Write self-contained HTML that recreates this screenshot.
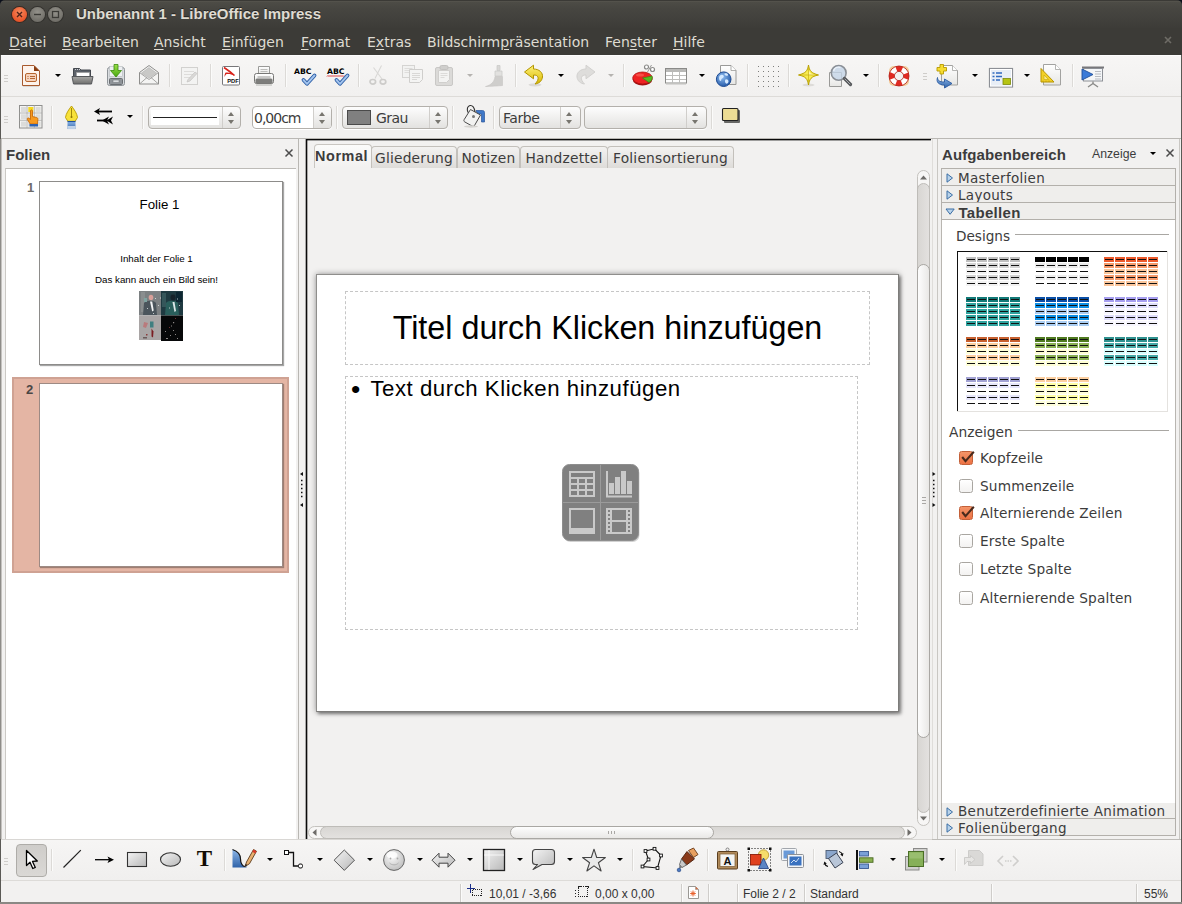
<!DOCTYPE html>
<html lang="de"><head><meta charset="utf-8"><title>Unbenannt 1 - LibreOffice Impress</title>
<style>
*{box-sizing:border-box;margin:0;padding:0}
html,body{width:1182px;height:904px;overflow:hidden;background:#f2f1f0}
body{position:relative;font-family:"DejaVu Sans","Liberation Sans",sans-serif;font-size:14px;color:#3c3c3c}
.abs{position:absolute}
.b{font-family:"Liberation Sans",sans-serif;font-weight:bold;font-size:15px}
#titlebar{left:0;top:0;width:1182px;height:28px;background:linear-gradient(#3b3a36 0,#3b3a36 1px,#5a5851 1px,#4d4c46 2px,#474641 30%,#3d3c38 100%);border-radius:5px 5px 0 0}
#corners{left:0;top:0;width:1182px;height:10px;background:#0b0f1a}
#menubar{left:0;top:28px;width:1182px;height:27.5px;background:#3c3b37}
.menu{position:absolute;top:34px;color:#dfdbd2;font-size:14px;line-height:17px;white-space:nowrap}
.menu u{text-decoration-thickness:1px;text-underline-offset:2px}
#title{left:76px;top:5px;color:#dfdbd2;line-height:18px;white-space:nowrap;text-shadow:0 -1px 0 rgba(0,0,0,.5)}
.wbtn{position:absolute;top:7px;width:15px;height:15px;border-radius:50%}
#tb1{left:1px;top:55px;width:1180px;height:41px;background:linear-gradient(#f7f6f5,#f1f0ef)}
#tb2{left:1px;top:97px;width:1180px;height:41px;background:#f2f1f0}
.hline{position:absolute;height:1px}
.vsep{position:absolute;width:1px;background:#dcdad7;box-shadow:1px 0 0 #fbfbfa}
.ic{position:absolute;overflow:visible}
.dd{position:absolute;width:0;height:0;margin-left:.5px;border-left:3px solid transparent;border-right:3px solid transparent;border-top:3.2px solid #000}
.dd.dis{border-top-color:#b5b3b0}
.handle{position:absolute;width:4px;height:7px;background:repeating-linear-gradient(#cfcdca 0 1px,transparent 1px 3px)}
.combo{position:absolute;height:23px;border:1px solid #b3b0ab;border-radius:4px;background:linear-gradient(#fdfdfd,#e3e2e0);box-shadow:0 1px 0 #fff}
.spin{position:absolute;right:0;top:0;width:17px;height:21px;border-left:1px solid #d0cecb}
.spin:before,.spin:after{content:"";position:absolute;left:4.5px;border-left:3.5px solid transparent;border-right:3.5px solid transparent}
.spin:before{top:5px;border-bottom:4px solid #77756f}
.spin:after{top:13px;border-top:4px solid #77756f}
.ctext{position:absolute;top:3px;font-size:14px;line-height:17px;color:#3c3c3c;white-space:nowrap}
.panel-title{position:absolute;color:#3c3c3c;line-height:18px;white-space:nowrap}
.tab{position:absolute;top:146px;height:22px;border:1px solid #c3c0bb;border-bottom:none;background:linear-gradient(#f3f2f1,#dedcd9);font-size:13.8px;line-height:23px;text-align:center;color:#3c3c3c;white-space:nowrap;border-radius:4px 4px 0 0;letter-spacing:.2px}
.sec{position:absolute;left:941px;width:235px;height:17px;border:1px solid #b3b0ab;background:#efeeec;font-size:14px;line-height:15px;color:#3c3c3c;white-space:nowrap}
.sec span{position:absolute;left:16px;top:2px;font-size:13.5px;letter-spacing:.3px}
.cb{position:absolute;left:959px;width:14px;height:14px;border:1px solid #a9a6a1;border-radius:2.5px;background:linear-gradient(#fff,#f3f2f1)}
.cb.on{background:linear-gradient(#f49468,#ec7244);border-color:#c46038}
.cbl{position:absolute;left:980px;font-size:13.7px;line-height:17px;color:#3c3c3c;white-space:nowrap;letter-spacing:.15px}
.st{position:absolute;top:886px;font-family:"Liberation Sans",sans-serif;font-size:12px;line-height:16px;color:#333;white-space:nowrap}
.ssep{position:absolute;top:884px;width:1px;height:18px;background:#cfcdca;box-shadow:1px 0 0 #fbfbfa}
</style></head><body>
<!-- window frame -->
<div id="corners" class="abs"></div>
<div id="titlebar" class="abs"></div>
<div id="menubar" class="abs"></div>
<div class="wbtn" style="left:12px;background:radial-gradient(circle at 50% 35%,#f58a5e,#e9552a 70%,#c9441f);box-shadow:0 0 0 1px #3a2a22"></div>
<div class="wbtn" style="left:30px;background:radial-gradient(circle at 50% 35%,#93918a,#706e68 75%);box-shadow:0 0 0 1px #33322e"></div>
<div class="wbtn" style="left:48px;background:radial-gradient(circle at 50% 35%,#93918a,#706e68 75%);box-shadow:0 0 0 1px #33322e"></div>
<svg class="ic" style="left:12px;top:7px" width="52" height="15"><path d="M5 5l5 5M10 5l-5 5" stroke="#50231a" stroke-width="1.4" fill="none"/><path d="M22 7.5h7" stroke="#3b3a36" stroke-width="1.4"/><rect x="40.5" y="4.5" width="6" height="6" fill="none" stroke="#3b3a36" stroke-width="1.3"/></svg>
<div id="title" class="abs b">Unbenannt 1 - LibreOffice Impress</div>
<div class="menu" style="left:9px"><u>D</u>atei</div>
<div class="menu" style="left:62px"><u>B</u>earbeiten</div>
<div class="menu" style="left:154px"><u>A</u>nsicht</div>
<div class="menu" style="left:222px"><u>E</u>infügen</div>
<div class="menu" style="left:301px"><u>F</u>ormat</div>
<div class="menu" style="left:367px">E<u>x</u>tras</div>
<div class="menu" style="left:427px">Bildschirm<u>p</u>räsentation</div>
<div class="menu" style="left:605px">Fen<u>s</u>ter</div>
<div class="menu" style="left:673px"><u>H</u>ilfe</div>
<svg class="ic" style="left:1164px;top:36px" width="9" height="9"><path d="M1 1l6 6M7 1l-6 6" stroke="#6e6c66" stroke-width="1.6"/></svg>
<div class="abs" style="left:0;top:55px;width:1px;height:849px;background:#5a5955"></div>
<div class="abs" style="left:1181px;top:55px;width:1px;height:849px;background:#5a5955"></div>
<!-- toolbars -->
<div id="tb1" class="abs"></div><div class="hline" style="left:1px;top:55px;width:1180px;background:#fdfdfd"></div>
<div class="hline" style="left:1px;top:96px;width:1180px;background:#dddbd8"></div>
<div id="tb2" class="abs"></div>
<!--TB1S--><svg width="0" height="0" style="position:absolute"><defs>
<linearGradient id="gPaper" x1="0" y1="0" x2="0" y2="1"><stop offset="0" stop-color="#fff"/><stop offset="1" stop-color="#e6e6e4"/></linearGradient>
<linearGradient id="gGrey" x1="0" y1="0" x2="0" y2="1"><stop offset="0" stop-color="#a8a8a6"/><stop offset="1" stop-color="#6e6e6c"/></linearGradient>
<linearGradient id="gGreen" x1="0" y1="0" x2="0" y2="1"><stop offset="0" stop-color="#9be04a"/><stop offset="1" stop-color="#4aa810"/></linearGradient>
<linearGradient id="gYel" x1="0" y1="0" x2="0" y2="1"><stop offset="0" stop-color="#fff27a"/><stop offset="1" stop-color="#d8b800"/></linearGradient>
<linearGradient id="gBlue" x1="0" y1="0" x2="0" y2="1"><stop offset="0" stop-color="#8db7e8"/><stop offset="1" stop-color="#2f62a8"/></linearGradient>
<radialGradient id="gGlobe" cx=".4" cy=".35" r=".7"><stop offset="0" stop-color="#8fbdf0"/><stop offset="1" stop-color="#1f55a5"/></radialGradient>
<radialGradient id="gSmile" cx=".4" cy=".35" r=".7"><stop offset="0" stop-color="#fafafa"/><stop offset="1" stop-color="#bdbdbd"/></radialGradient>
<linearGradient id="gBtn" x1="0" y1="0" x2="1" y2="1"><stop offset="0" stop-color="#f4f4f4"/><stop offset="1" stop-color="#b8b8b8"/></linearGradient>
</defs></svg>
<div class="handle" style="left:4px;top:75px"></div>
<svg class="ic" style="left:21px;top:64px" width="20" height="23" viewBox="0 0 20 23" ><path d="M1.500 1.500h11.500l5.500 5.500v14.500h-17z" fill="#fdf3ec" stroke="#a85a2e" stroke-width="1"/><path d="M13 1.500l5.500 5.500h-5.500z" fill="#8a3d12"/><rect x="4.500" y="9.500" width="11" height="8" rx="1.500" fill="#f6d3bd" stroke="#b5652f"/><path d="M6.500 12.500h1M9 12.500h5M6.500 14.500h1M9 14.500h5" stroke="#b5652f" stroke-width="1"/><path d="M2 22.500h16" stroke="#d9d7d4"/></svg>
<div class="dd" style="left:54px;top:74px"></div>
<svg class="ic" style="left:71px;top:66px" width="23" height="19" viewBox="0 0 23 19" ><path d="M2.500 2.500h6l1.500 1.500h9.500v10h-17z" fill="#5d626a" stroke="#44484e"/><path d="M4 3.500h1M6 3.500h1M8 3.500h1" stroke="#c8ccd2" stroke-width="1"/><rect x="5.500" y="6.500" width="13" height="4" fill="#fff" stroke="#9a9a9a" stroke-width=".6"/><path d="M1 10.500h21l-1.500 7.500h-18z" fill="url(#gGrey)" stroke="#55575a"/></svg>
<svg class="ic" style="left:106px;top:64px" width="20" height="23" viewBox="0 0 20 23" ><rect x="1.500" y="3.500" width="17" height="18" rx="2" fill="#d9dcdf" stroke="#8e9397"/><rect x="3.500" y="2.500" width="13" height="10" fill="#eef0f2" stroke="#b3b7bb" stroke-width=".6"/><rect x="3.500" y="14.500" width="13" height="6" rx="1" fill="#8f9499" stroke="#6a6e72"/><rect x="7" y="16" width="6" height="2.500" fill="#d9dcdf" stroke="#6a6e72" stroke-width=".5"/><path d="M8 0.500h4v6h3.500l-5.500 6.500l-5.500-6.500h3.500z" fill="url(#gGreen)" stroke="#3b8a0c" stroke-width=".8"/></svg>
<svg class="ic" style="left:138px;top:64px" width="22" height="22" viewBox="0 0 22 22" ><path d="M1.500 8.500l9.500-7l9.500 7v11.500h-19z" fill="#f4f4f3" stroke="#8e8e8c"/><path d="M3.500 9l7.500-5.500l7.500 5.500l-7.500 5z" fill="#c9c9c7" stroke="#aaa" stroke-width=".5"/><path d="M1.500 8.500l9.500 7l9.500-7M1.500 20l7.500-6.500M20.500 20l-7.500-6.500" fill="none" stroke="#9c9c9a" stroke-width=".9"/></svg>
<div class="vsep" style="left:169px;top:64px;height:23px"></div>
<svg class="ic" style="left:180px;top:66px" width="20" height="20" viewBox="0 0 20 20" ><rect x="1.500" y="1.500" width="16" height="17" fill="#f3f3f2" stroke="#d2d1cf"/><path d="M4 5.500h10M4 8.500h10M4 11.500h6" stroke="#dddcda"/><path d="M8 13.500l7-7.500l2 1.500l-7 7.500l-3 1z" fill="#dad9d7" stroke="#c4c3c1" stroke-width=".7"/></svg>
<div class="vsep" style="left:210px;top:64px;height:23px"></div>
<svg class="ic" style="left:221px;top:65px" width="20" height="22" viewBox="0 0 20 22" ><rect x="1.500" y="1.500" width="17" height="18.500" rx="1" fill="#fff" stroke="#77777a"/><path d="M3 2.500c2.500 1 6 3.500 10.500 8c-2.500-1.200-5-1.800-8-1.500c-1 .8-1.500 2-2 3c0-2 .3-3.500 1.200-4.500c2-.3 3.500 0 5 .5c-2.500-2.500-5-4-6.700-5.500z" fill="#d8241c"/><path d="M3 2.500c3 2 6.500 4.500 10.500 8" fill="none" stroke="#d8241c" stroke-width="1.600"/><text x="12" y="18" font-family="Liberation Sans,sans-serif" font-weight="bold" font-size="6.200" text-anchor="middle" fill="#111" textLength="11.500" lengthAdjust="spacingAndGlyphs">PDF</text></svg>
<svg class="ic" style="left:253px;top:65px" width="22" height="21" viewBox="0 0 22 21" ><path d="M5.500 1.500h11v8h-11z" fill="url(#gPaper)" stroke="#9a9a98"/><path d="M7.500 4.500h7M7.500 6.500h7" stroke="#bdbdbb"/><rect x="1.500" y="8.500" width="19" height="10" rx="2" fill="url(#gPaper)" stroke="#777775"/><rect x="2.500" y="13.500" width="17" height="5" rx="1.500" fill="#7d7d7b"/><path d="M4.500 12h13" stroke="#9a9a98"/><path d="M3 20h16" stroke="#c9c8c6" stroke-width="1.500"/></svg>
<div class="vsep" style="left:285px;top:64px;height:23px"></div>
<svg class="ic" style="left:294px;top:65px" width="24" height="23" viewBox="0 0 24 23" ><text x="0" y="9" font-family="DejaVu Sans,sans-serif" font-weight="bold" font-size="7.600" fill="#000" textLength="17.500" lengthAdjust="spacingAndGlyphs">ABC</text><path d="M9.500 15l3.500 3.800l7.500-8.300" fill="none" stroke="#2c5ea6" stroke-width="3.800" stroke-linecap="round" stroke-linejoin="round"/><path d="M9.500 15l3.500 3.800l7.500-8.300" fill="none" stroke="#a3c4ee" stroke-width="1.900" stroke-linecap="round" stroke-linejoin="round"/></svg>
<svg class="ic" style="left:327px;top:65px" width="24" height="23" viewBox="0 0 24 23" ><text x="0" y="9" font-family="DejaVu Sans,sans-serif" font-weight="bold" font-size="7.600" fill="#000" textLength="17.500" lengthAdjust="spacingAndGlyphs">ABC</text><path d="M0 11.500l1-1l1 1l1-1l1 1l1-1l1 1l1-1l1 1l1-1l1 1l1-1l1 1l1-1l1 1l1-1l1 1l1-1" fill="none" stroke="#d81e1e" stroke-width=".9"/><path d="M9.500 15l3.500 3.800l7.500-8.300" fill="none" stroke="#2c5ea6" stroke-width="3.800" stroke-linecap="round" stroke-linejoin="round"/><path d="M9.500 15l3.500 3.800l7.500-8.300" fill="none" stroke="#a3c4ee" stroke-width="1.900" stroke-linecap="round" stroke-linejoin="round"/></svg>
<div class="vsep" style="left:358px;top:64px;height:23px"></div>
<svg class="ic" style="left:368px;top:64px" width="20" height="23" viewBox="0 0 20 23" ><path d="M13.500 1.500l-6.500 13M5.500 3.500l8.500 11.500" stroke="#d9d8d6" stroke-width="1.100" fill="none"/><ellipse cx="4.800" cy="17.800" rx="2.800" ry="2.300" fill="none" stroke="#cdccca" stroke-width="1.700"/><ellipse cx="15" cy="17.800" rx="2.800" ry="2.300" fill="none" stroke="#cdccca" stroke-width="1.700"/></svg>
<svg class="ic" style="left:401px;top:64px" width="23" height="20" viewBox="0 0 23 20" ><rect x="1.500" y="1.500" width="12" height="12" fill="#f2f2f1" stroke="#d5d4d2"/><path d="M3.500 4.500h8M3.500 6.500h8M3.500 8.500h8" stroke="#dedddb"/><path d="M8.500 5.500h13v10l-3 3h-10z" fill="#f4f4f3" stroke="#cfcecc"/><path d="M11 9.500h8M11 11.500h8M11 13.500h8M11 15.500h5" stroke="#d9d8d6"/></svg>
<svg class="ic" style="left:434px;top:64px" width="20" height="23" viewBox="0 0 20 23" ><rect x="1.500" y="3.500" width="17" height="18" rx="1.500" fill="#dbdad8" stroke="#c9c8c6"/><rect x="6" y="1.500" width="8" height="4" rx="1.500" fill="#cfcecc" stroke="#c2c1bf"/><path d="M4.500 6.500h11v9l-3 3h-8z" fill="#f3f3f2" stroke="#d0cfcd"/><path d="M6.500 9.500h7M6.500 11.500h7M6.500 13.500h4" stroke="#dcdbd9"/></svg>
<div class="dd dis" style="left:466px;top:74px"></div>
<svg class="ic" style="left:484px;top:64px" width="21" height="24" viewBox="0 0 21 24" ><path d="M13 1.500h3v5h-3z" fill="#d9d8d6" stroke="#cccbc9" stroke-width=".8"/><path d="M11 7h7v5h-7z" fill="#e2e1df" stroke="#cccbc9" stroke-width=".8"/><path d="M11 12.500h7.500v9c-4 .5-12 .8-17 1c6-1.500 9-5 9.500-10z" fill="#cfcecc" stroke="#c6c5c3" stroke-width=".6"/></svg>
<div class="vsep" style="left:515px;top:64px;height:23px"></div>
<svg class="ic" style="left:523px;top:64px" width="22" height="23" viewBox="0 0 22 23" ><ellipse cx="12" cy="20.800" rx="6.500" ry="1.600" fill="#dcdad7"/><path d="M1.500 8L10.500 1.200V5C16 5 20 8.500 19.500 13C19 17 16 19.500 12 20C14.500 17.500 15.500 15 15 13.500C14.500 11.500 13 11 10.500 11V14.800z" fill="url(#gYel)" stroke="#b39500" stroke-width="1" stroke-linejoin="round"/></svg>
<div class="dd" style="left:557px;top:74px"></div>
<svg class="ic" style="left:576px;top:64px" width="22" height="23" viewBox="0 0 22 23" ><path transform="translate(20.500 0) scale(-1 1)" d="M1.500 8L10.500 1.200V5C16 5 20 8.500 19.500 13C19 17 16 19.500 12 20C14.500 17.500 15.500 15 15 13.500C14.500 11.500 13 11 10.500 11V14.800z" fill="#dedddb" stroke="#d2d1cf" stroke-width="1" stroke-linejoin="round"/></svg>
<div class="dd dis" style="left:607px;top:74px"></div>
<div class="vsep" style="left:623px;top:64px;height:23px"></div>
<svg class="ic" style="left:631px;top:63px" width="27" height="24" viewBox="0 0 27 24" ><ellipse cx="11.500" cy="16.500" rx="9.800" ry="6" fill="#a01212"/><ellipse cx="11.500" cy="15" rx="9.800" ry="6" fill="#ee2222" stroke="#b01010" stroke-width=".8"/><path d="M11.500 15l9.500-2c.8 2.500-.2 5-3 6.500z" fill="#58b820" stroke="#2f8a10" stroke-width=".6"/><ellipse cx="9" cy="12" rx="4" ry="1.500" fill="#ff7a6a" opacity=".5"/><circle cx="15.500" cy="4" r="2" fill="#fff" stroke="#8a8a88" stroke-width="1.200"/><circle cx="21.500" cy="6.500" r="2" fill="#fff" stroke="#8a8a88" stroke-width="1.200"/><path d="M20.500 2l-4 7" stroke="#9a9a98" stroke-width="1"/></svg>
<svg class="ic" style="left:664px;top:67px" width="24" height="18" viewBox="0 0 24 18" ><rect x="1.500" y="1.500" width="21" height="14.500" fill="#fff" stroke="#8a8a88"/><rect x="2" y="2" width="20" height="3" fill="#b9b9b7"/><path d="M2 8.500h20M2 12.500h20M8.500 5v11M15.500 5v11" stroke="#bdbdbb"/><path d="M2 17.200h20" stroke="#cfcecc"/></svg>
<div class="dd" style="left:698px;top:74px"></div>
<svg class="ic" style="left:715px;top:64px" width="23" height="23" viewBox="0 0 23 23" ><path d="M5.500 1.500h10.500l5 5v14h-15.500z" fill="url(#gPaper)" stroke="#9a9a98"/><path d="M16 1.500v5h5" fill="#fff" stroke="#9a9a98" stroke-width=".8"/><circle cx="8.700" cy="15.200" r="7.300" fill="url(#gGlobe)" stroke="#1c4a92"/><path d="M4.500 12c1.500-1.500 3-1.500 4-.5s-.5 2.500-1.500 3s-.5 2.500-1.500 2.500s-2-3-1-5zM10.500 15.500c1.500-.5 3 .5 3 2s-1.500 2.500-2.500 2s-1.500-3-.5-4z" fill="#d4e9ff"/><path d="M9.500 9.500c1.500-.5 3 0 3.500 1s-1 1.500-2 1.200s-2-1.500-1.500-2.200z" fill="#d4e9ff"/></svg>
<div class="vsep" style="left:747px;top:64px;height:23px"></div>
<svg class="ic" style="left:758px;top:66px" width="21" height="21" viewBox="0 0 21 21" shape-rendering="crispEdges"><rect x="0" y="0" width="1" height="1" fill="#7d7d7b"/><rect x="0" y="5" width="1" height="1" fill="#7d7d7b"/><rect x="0" y="10" width="1" height="1" fill="#7d7d7b"/><rect x="0" y="15" width="1" height="1" fill="#7d7d7b"/><rect x="0" y="20" width="1" height="1" fill="#7d7d7b"/><rect x="5" y="0" width="1" height="1" fill="#7d7d7b"/><rect x="5" y="5" width="1" height="1" fill="#7d7d7b"/><rect x="5" y="10" width="1" height="1" fill="#7d7d7b"/><rect x="5" y="15" width="1" height="1" fill="#7d7d7b"/><rect x="5" y="20" width="1" height="1" fill="#7d7d7b"/><rect x="10" y="0" width="1" height="1" fill="#7d7d7b"/><rect x="10" y="5" width="1" height="1" fill="#7d7d7b"/><rect x="10" y="10" width="1" height="1" fill="#7d7d7b"/><rect x="10" y="15" width="1" height="1" fill="#7d7d7b"/><rect x="10" y="20" width="1" height="1" fill="#7d7d7b"/><rect x="15" y="0" width="1" height="1" fill="#7d7d7b"/><rect x="15" y="5" width="1" height="1" fill="#7d7d7b"/><rect x="15" y="10" width="1" height="1" fill="#7d7d7b"/><rect x="15" y="15" width="1" height="1" fill="#7d7d7b"/><rect x="15" y="20" width="1" height="1" fill="#7d7d7b"/><rect x="20" y="0" width="1" height="1" fill="#7d7d7b"/><rect x="20" y="5" width="1" height="1" fill="#7d7d7b"/><rect x="20" y="10" width="1" height="1" fill="#7d7d7b"/><rect x="20" y="15" width="1" height="1" fill="#7d7d7b"/><rect x="20" y="20" width="1" height="1" fill="#7d7d7b"/></svg>
<div class="vsep" style="left:788px;top:64px;height:23px"></div>
<svg class="ic" style="left:797px;top:64px" width="23" height="23" viewBox="0 0 23 23" ><ellipse cx="11.500" cy="21" rx="6" ry="1.500" fill="#dddbd8"/><path d="M11.500 1c1 6 2.500 8 10 10c-7.500 1.500-9 4-10 10c-1-6-2.500-8.500-10-10c7.500-2 9-4 10-10z" fill="#f8ec50" stroke="#b8a000" stroke-width="1" stroke-linejoin="round"/><path d="M11.500 4c.5 4 1.500 6 7 7c-5.500 0-6.500.5-7 0z" fill="#fffbd0" opacity=".7"/><path d="M11.500 3v16M3.500 11h16" stroke="#c8b010" stroke-width=".7"/></svg>
<svg class="ic" style="left:828px;top:63px" width="25" height="25" viewBox="0 0 25 25" ><path d="M1.500 9.500h12v14h-12z" fill="url(#gPaper)" stroke="#9a9a98"/><circle cx="10.700" cy="9.900" r="7.400" fill="#c3d3e6" fill-opacity=".8" stroke="#8a8f96" stroke-width="1.600"/><path d="M5.500 8c1-3 4-4.500 7-3.500" fill="none" stroke="#eaf1f9" stroke-width="1.500"/><path d="M16.500 15.500l6 6" stroke="#55575a" stroke-width="3.200" stroke-linecap="round"/><path d="M17 16l5 5" stroke="#a8aaad" stroke-width="1" stroke-linecap="round"/></svg>
<div class="dd" style="left:862px;top:74px"></div>
<div class="vsep" style="left:878px;top:64px;height:23px"></div>
<svg class="ic" style="left:888px;top:65px" width="22" height="22" viewBox="0 0 22 22" ><rect x="1" y="1" width="20" height="20" rx="5" fill="#f0a848" opacity=".55"/><circle cx="11" cy="11" r="7.300" fill="none" stroke="#fff" stroke-width="5.400"/><circle cx="11" cy="11" r="7.300" fill="none" stroke="#e02a22" stroke-width="5.400" stroke-dasharray="5.730 5.730" stroke-dashoffset="2.860"/><circle cx="11" cy="11" r="10" fill="none" stroke="#b01a14" stroke-width=".8"/><circle cx="11" cy="11" r="4.600" fill="#f3f2f1" stroke="#b01a14" stroke-width=".8"/></svg>
<div class="handle" style="left:923px;top:73px"></div>
<svg class="ic" style="left:935px;top:63px" width="25" height="25" viewBox="0 0 25 25" ><path d="M6.500 2.500h11l5 5v14.500h-16z" fill="url(#gPaper)" stroke="#a2a2a0"/><path d="M17.500 2.500v5h5" fill="#fff" stroke="#a2a2a0" stroke-width=".8"/><path d="M5 1.500h3.500v3h3v3.500h-3v3h-3.500v-3h-3v-3.500h3z" fill="#f6dc30" stroke="#b89a00" stroke-width=".9"/><path d="M2.500 14.500c0 3 2 4.500 7 4.500v-3l7.500 4.500l-7.500 4.500v-3c-6 0-8.500-3-7-7.500z" fill="url(#gBlue)" stroke="#2a5aa0" stroke-width=".9" stroke-linejoin="round"/></svg>
<div class="dd" style="left:971px;top:74px"></div>
<svg class="ic" style="left:988px;top:67px" width="26" height="22" viewBox="0 0 26 22" ><rect x="1.500" y="1.500" width="23" height="18.500" fill="#e8eef6" stroke="#8d9096" stroke-width="1.200"/><rect x="2.500" y="2.500" width="21" height="16.500" fill="none" stroke="#fff"/><path d="M4.500 6h2M8 6h6M4.500 9.500h2M8 9.500h6M4.500 13h2M8 13h4" stroke="#2f6ac0" stroke-width="1.400"/><rect x="15" y="11.500" width="7.500" height="6" fill="#b5c414" stroke="#7d8a0a" stroke-width=".8"/></svg>
<div class="dd" style="left:1023px;top:74px"></div>
<svg class="ic" style="left:1039px;top:63px" width="24" height="24" viewBox="0 0 24 24" ><path d="M4.500 1.500h12l5 5v15.500h-17z" fill="url(#gPaper)" stroke="#a2a2a0"/><path d="M16.500 1.500v5h5" fill="#fff" stroke="#a2a2a0" stroke-width=".8"/><path d="M2 5.500v13.500h13z" fill="#f2d028" stroke="#b89600" stroke-width="1" stroke-linejoin="round"/><path d="M5 12v4.500h4.500z" fill="#f8e890" stroke="#c8a800" stroke-width=".6"/><path d="M4 19v-1.500M7 19v-1.500M10 19v-1.500" stroke="#b89600" stroke-width=".6"/></svg>
<div class="vsep" style="left:1072px;top:64px;height:23px"></div>
<svg class="ic" style="left:1080px;top:66px" width="25" height="22" viewBox="0 0 25 22" ><path d="M2 1.500h22" stroke="#77777a" stroke-width="2"/><rect x="3.500" y="2.500" width="19" height="12.500" fill="#f4f6f8" stroke="#8d9096"/><path d="M2 3v11l11-5.500z" fill="#3a7ad8" stroke="#1f4f9a" stroke-width=".9" stroke-linejoin="round"/><path d="M15 5.500h6M15 8h6M15 10.500h6M15 13h6" stroke="#a9adb3" stroke-width=".8"/><path d="M13 15.500v2.500M13 17.500l-5 3.500M13 17.500l5 3.500" stroke="#8a8a88" stroke-width="1.400" fill="none"/></svg>
<!--TB1E-->
<!--TB2S--><div class="handle" style="left:4px;top:116px"></div>
<svg class="ic" style="left:19px;top:105px" width="24" height="24" viewBox="0 0 24 24" ><rect x=".5" y=".5" width="22.500" height="22.500" fill="#f4f4f3" stroke="#8f8f8d"/><path d="M8 .5v22.500M15.300 .5v22.500M.5 8h22.500M.5 15.300h22.500" stroke="#a9a9a7" stroke-width=".8"/><rect x="2" y="2" width="5" height="5" fill="#dcdcda"/><rect x="9.3" y="2" width="5" height="5" fill="#f6d81e"/><rect x="16.6" y="2" width="5" height="5" fill="#dcdcda"/><rect x="2" y="9.3" width="5" height="5" fill="#dcdcda"/><rect x="9.3" y="9.3" width="5" height="5" fill="#dcdcda"/><rect x="16.6" y="9.3" width="5" height="5" fill="#dcdcda"/><rect x="2" y="16.6" width="5" height="5" fill="#dcdcda"/><rect x="9.3" y="16.6" width="5" height="5" fill="#dcdcda"/><rect x="16.6" y="16.6" width="5" height="5" fill="#dcdcda"/><path d="M11.500 5.500c.8-1 2-.6 2 .6v5.500l3.800.8c1.200.3 1.700 1 1.600 2.200l-.5 4.400h-7.200l-2.800-4.500c-.6-1 .4-2 1.500-1.300l1.600 1.300z" fill="#f79a1e" stroke="#c86a08" stroke-width=".9" stroke-linejoin="round"/><rect x="10.500" y="19" width="8.500" height="2.500" fill="#2f62b0"/></svg>
<div class="vsep" style="left:51px;top:106px;height:23px"></div>
<svg class="ic" style="left:64px;top:105px" width="16" height="25" viewBox="0 0 16 25" ><path d="M7.500 1c3 4 5.500 7.500 6 11.500l-2.500 4h-7l-2.500-4c.5-4 3-7.500 6-11.500z" fill="#f8e23a" stroke="#b89a00" stroke-width=".9" stroke-linejoin="round"/><path d="M7.500 3v8.500" stroke="#8a7400" stroke-width=".8"/><circle cx="7.500" cy="12" r="1" fill="#8a7400"/><path d="M3.500 16.500h8v7.500h-8z" fill="url(#gBlue)"/><path d="M3.500 16.500h8" stroke="#1f4f9a" stroke-width="1.200"/><rect x="3.500" y="21" width="8" height="3.500" fill="#dfe8f4" opacity=".8"/></svg>
<svg class="ic" style="left:93px;top:107px" width="21" height="19" viewBox="0 0 21 19" ><path d="M4 4.500h15" stroke="#000" stroke-width="1.800"/><path d="M1 4.500l6-3.500l-1.500 3.500l1.500 3.500z" fill="#000"/><path d="M4 13.500h9" stroke="#000" stroke-width="1.800"/><path d="M9 13.500l7-4l-2 4l2 4zM13.500 13.500l6.500-4l-2 4l2 4z" fill="#000"/></svg>
<div class="dd" style="left:126px;top:115px"></div>
<div class="vsep" style="left:142px;top:106px;height:23px"></div>
<div class="combo" style="left:148px;top:106px;width:93px"><div style="position:absolute;left:2px;top:3px;width:68px;height:15px;background:#fff"></div><div style="position:absolute;left:4px;top:10px;width:64px;height:1px;background:#222"></div><div class="spin" style="width:18px"></div></div>
<div class="combo" style="left:252px;top:106px;width:80px;background:#fff"><div class="ctext" style="left:1px;letter-spacing:-1px">0,00cm</div><div class="spin" style="width:18px;background:linear-gradient(#fdfdfd,#e3e2e0);border-radius:0 3px 3px 0"></div></div>
<div class="vsep" style="left:336px;top:106px;height:23px"></div>
<div class="combo" style="left:342px;top:106px;width:106px"><div style="position:absolute;left:4px;top:3px;width:24px;height:15px;background:#808080;border:1px solid #4a4a4a"></div><div class="ctext" style="left:33px;letter-spacing:-.6px">Grau</div><div class="spin" style="width:18px"></div></div>
<div class="vsep" style="left:452px;top:106px;height:23px"></div>
<svg class="ic" style="left:462px;top:104px" width="24" height="24" viewBox="0 0 24 24" ><path d="M14 6.500h6.500c1.500 0 2 1 2 2v9.500h-3v-8h-4z" fill="#3f78c8" stroke="#2a559a" stroke-width=".7"/><path d="M8.500 5.500l10 5.500l-6 10.500c-.5.800-1.500 1-2.300.6l-7.500-4.200c-.8-.5-1-1.400-.6-2.200z" fill="#f2f2f1" stroke="#4a4a4a" stroke-width="1" stroke-linejoin="round"/><path d="M6 8.500c-1.500-3.500-.5-6.500 2-7s4.500 2 5 6.500" fill="none" stroke="#333" stroke-width="1.100"/><circle cx="11.500" cy="12.500" r="1.500" fill="#777"/><ellipse cx="9" cy="22.500" rx="7" ry="1.200" fill="#d5d3d0"/></svg>
<div class="vsep" style="left:493px;top:106px;height:23px"></div>
<div class="combo" style="left:499px;top:106px;width:82px"><div class="ctext" style="left:3px;letter-spacing:-.45px">Farbe</div><div class="spin" style="width:20px"></div></div>
<div class="combo" style="left:584px;top:106px;width:123px"><div class="spin" style="width:20px"></div></div>
<div class="vsep" style="left:711px;top:106px;height:23px"></div>
<svg class="ic" style="left:721px;top:107px" width="20" height="17" viewBox="0 0 20 17" ><rect x="3" y="3" width="16" height="13" rx="1" fill="#3a3a38" opacity=".75"/><rect x="1.500" y="1.500" width="15.500" height="12" rx="1" fill="#ecdc94" stroke="#222" stroke-width="1.100"/></svg>
<!--TB2E-->

<!-- separator under toolbars -->
<div class="hline" style="left:1px;top:138px;width:1180px;background:#bab8b4"></div>
<!-- left panel -->
<div class="panel-title b" style="left:6px;top:146px">Folien</div>
<svg class="ic" style="left:284px;top:148px" width="10" height="10"><path d="M1.5 1.5l7 7M8.500 1.5l-7 7" stroke="#4c4c4c" stroke-width="1.5"/></svg>
<div class="abs" style="left:5px;top:168px;width:291px;height:671px;background:#fff;border-left:1px solid #cbc9c5;border-top:1px solid #bdbbb7"></div>
<div class="abs" style="left:0;top:139px;width:1px;height:700px;background:#8e8c88"></div><div class="abs" style="left:1px;top:139px;width:1px;height:700px;background:#c4c2bf"></div>
<div class="abs" style="left:298px;top:139px;width:1px;height:700px;background:#b9b7b3"></div>
<svg class="ic" style="left:299px;top:470px" width="6" height="38"><path d="M4 2v4l-3-2zM4 33v4l-3-2z" fill="#111"/><path d="M2 10.500h1.500M2 14.500h1.500M2 18.500h1.500M2 22.500h1.500M2 26.500h1.500" stroke="#111" stroke-width="1.300"/></svg>
<!-- thumb 1 -->
<div class="abs b" style="left:27px;top:181px;font-size:13px;line-height:14px;color:#6e6c69">1</div>
<div class="abs" style="left:39px;top:181px;width:244px;height:184px;background:#fff;border:1px solid #8d8c8a;box-shadow:1px 1px 1px rgba(0,0,0,.35)"></div>
<div class="abs" style="left:37px;top:197px;width:245px;text-align:center;font:13.3px/15px 'Liberation Sans',sans-serif;color:#000">Folie 1</div>
<div class="abs" style="left:34px;top:252.500px;width:245px;text-align:center;font:9.75px/11px 'Liberation Sans',sans-serif;color:#000;white-space:nowrap">Inhalt der Folie 1</div>
<div class="abs" style="left:34px;top:273.500px;width:245px;text-align:center;font:9.75px/11px 'Liberation Sans',sans-serif;color:#000;white-space:nowrap">Das kann auch ein Bild sein!</div>
<svg class="ic" style="left:139px;top:291px" width="44" height="50" viewBox="0 0 44 50"><defs><filter id="bl" x="0" y="0" width="1" height="1"><feGaussianBlur stdDeviation=".7"/></filter></defs><rect width="22" height="24.500" fill="#7c8082"/><rect x="22" width="22" height="24.500" fill="#1f3a41"/><rect y="24.500" width="22" height="24.500" fill="#a9a5a5"/><rect x="22" y="24.500" width="22" height="25.500" fill="#070809"/><g filter="url(#bl)"><rect x="2" y="1" width="4" height="20" fill="#8a8e8f"/><path d="M5 12c2-3 10-3 12 0l1 12h-14z" fill="#4c555b"/><ellipse cx="12" cy="6.500" rx="2.300" ry="2.800" fill="#d9a09a"/><path d="M11 10.500h2.200l1.500 9l-1.500 1z" fill="#f2f4f5"/><rect x="5" y="7" width="3" height="4" fill="#7fa3a0"/><path d="M27 12c2-3 10-3 12 0l1 12h-14z" fill="#2b5e5c"/><ellipse cx="34" cy="6.500" rx="2.600" ry="3" fill="#15242b"/><path d="M33.500 11h2l1.500 9l-1.500 1z" fill="#dfe9ea"/><rect x="37" y="1" width="6" height="10" fill="#0f2730"/><rect x="23" y="2" width="4" height="14" fill="#35565a"/><path d="M11 30.500h3.500v6h-3.500z" fill="#3f7f80"/><path d="M5 31l4 1l-2 5l-3-1z" fill="#b97a7c"/><path d="M12.500 37.500l2 3l-.5 6l-1.500-1z" fill="#7a1f24"/><rect x="4" y="46" width="4" height="1.500" fill="#6a5a5a"/><rect x="7" y="43" width="1.500" height="1.500" fill="#8a3a3a"/></g><path d="M16 7h1v1h-1zM21 6.500h1v1h-1zM19 14h1v1h-1zM8 17h1v1h-1zM14 22h1v1h-1zM38 7.500h1v1h-1zM40 14h1v1h-1zM30 16.500h1v1h-1z" fill="#dfe6e6" opacity=".8"/><path d="M34 31h1.200v1.200h-1.200zM32 34.500h1v1h-1zM34 39h1v1h-1zM36 43h1v1h-1zM27 47h2v1h-2zM31 44h1v1h-1zM38 47h1v1h-1zM26 40h1v1h-1z" fill="#b9b3b0" opacity=".75"/><path d="M36 27h1v1h-1zM30 36h1v1h-1z" fill="#8a3a3a" opacity=".8"/></svg>
<!-- thumb 2 -->
<div class="abs" style="left:12px;top:377px;width:277px;height:196px;background:#e4b5a4;border:2px solid #cfa293"></div>
<div class="abs b" style="left:26px;top:383px;font-size:13px;line-height:14px;color:#4a4644">2</div>
<div class="abs" style="left:39px;top:383px;width:244px;height:184px;background:#fff;border:1px solid #9d8a84;box-shadow:1px 1px 1px rgba(0,0,0,.3)"></div>


<!-- center view -->
<div class="abs" style="left:306px;top:139px;width:625px;height:1px;background:#0a0a0a;box-shadow:0 1px 0 rgba(0,0,0,.35)"></div>
<div class="abs" style="left:306px;top:139px;width:1px;height:700px;background:#0a0a0a;box-shadow:1px 0 0 rgba(0,0,0,.3),-1px 0 0 rgba(0,0,0,.3)"></div>
<div class="tab b" style="left:314px;width:58px;top:144px;height:24px;background:linear-gradient(#fbfbfa,#f2f1f0);border-color:#c9c6c1;color:#3c3c3c;line-height:23px;letter-spacing:.6px;font-size:14.4px;padding-left:0;text-align:left">Normal</div>
<div class="tab" style="left:371px;width:86px">Gliederung</div>
<div class="tab" style="left:457px;width:63px">Notizen</div>
<div class="tab" style="left:520px;width:88px">Handzettel</div>
<div class="tab" style="left:607px;width:127px">Foliensortierung</div>
<!-- slide -->
<div class="abs" style="left:316px;top:274px;width:583px;height:438px;background:#fff;border:1px solid #8f8e8c;border-right-color:#7d7c7a;border-bottom-color:#7d7c7a;box-shadow:0 0 6px rgba(0,0,0,.38),2px 2px 3px rgba(0,0,0,.38)"></div>
<div class="abs" style="left:345px;top:291px;width:525px;height:74px;border:1px dashed #c6c6c6"></div>
<div class="abs" style="left:345px;top:376px;width:513px;height:254px;border:1px dashed #c6c6c6"></div>
<div class="abs" style="left:345px;top:308.600px;width:525px;text-align:center;font:32.3px/38px 'Liberation Sans',sans-serif;color:#000;white-space:nowrap">Titel durch Klicken hinzufügen</div>
<div class="abs" style="left:351px;top:375px;font:26.5px/29px 'Liberation Sans',sans-serif;color:#000;white-space:nowrap">•</div>
<div class="abs" style="left:370.500px;top:375px;font:22.2px/27px 'Liberation Sans',sans-serif;color:#000;white-space:nowrap;letter-spacing:.53px">Text durch Klicken hinzufügen</div>
<svg class="ic" style="left:562px;top:464px" width="79" height="79" viewBox="0 0 79 79"><rect x="1.5" y="2" width="76" height="76" rx="7" fill="#000" opacity=".18"/><rect x=".5" y=".5" width="76" height="76" rx="7" fill="#808080" stroke="#8e8e8e"/><path d="M38.500 1v75M1 38.500h75" stroke="#9b9b9b" stroke-width="1"/><rect x="7" y="7" width="26" height="26" fill="#c9c9c9"/><rect x="9" y="9" width="22" height="4" fill="#808080"/><rect x="9" y="15" width="6" height="4" fill="#808080"/><rect x="17" y="15" width="6" height="4" fill="#808080"/><rect x="25" y="15" width="6" height="4" fill="#808080"/><rect x="9" y="21" width="6" height="4" fill="#808080"/><rect x="17" y="21" width="6" height="4" fill="#808080"/><rect x="25" y="21" width="6" height="4" fill="#808080"/><rect x="9" y="27" width="6" height="4" fill="#808080"/><rect x="17" y="27" width="6" height="4" fill="#808080"/><rect x="25" y="27" width="6" height="4" fill="#808080"/><path d="M45 7v25.500h25" fill="none" stroke="#c9c9c9" stroke-width="2"/><rect x="47" y="19" width="5" height="11" fill="#c9c9c9"/><rect x="53" y="13" width="5" height="17" fill="#c9c9c9"/><rect x="59" y="7" width="5" height="23" fill="#c9c9c9"/><rect x="65" y="17" width="5" height="13" fill="#c9c9c9"/><rect x="7" y="44" width="26" height="26" fill="#c9c9c9"/><rect x="9" y="46" width="22" height="18" fill="#808080"/><rect x="44" y="44" width="26" height="26" fill="#c9c9c9"/><rect x="50" y="46" width="14" height="10" fill="#808080"/><rect x="50" y="58" width="14" height="10" fill="#808080"/><rect x="46" y="46" width="2" height="2" fill="#808080"/><rect x="66" y="46" width="2" height="2" fill="#808080"/><rect x="46" y="50" width="2" height="2" fill="#808080"/><rect x="66" y="50" width="2" height="2" fill="#808080"/><rect x="46" y="54" width="2" height="2" fill="#808080"/><rect x="66" y="54" width="2" height="2" fill="#808080"/><rect x="46" y="58" width="2" height="2" fill="#808080"/><rect x="66" y="58" width="2" height="2" fill="#808080"/><rect x="46" y="62" width="2" height="2" fill="#808080"/><rect x="66" y="62" width="2" height="2" fill="#808080"/><rect x="46" y="66" width="2" height="2" fill="#808080"/><rect x="66" y="66" width="2" height="2" fill="#808080"/></svg>

<!-- scrollbars -->
<div class="abs" style="left:917px;top:170px;width:13px;height:656px;border:1px solid #c4c2be;border-radius:7px;background:#f7f6f5"></div>
<div class="abs" style="left:917px;top:183px;width:13px;height:630px;border:1px solid #bebcb8;border-radius:7px;background:linear-gradient(90deg,#d8d6d3,#e3e1df)"></div>
<div class="abs" style="left:917px;top:264px;width:13px;height:474px;border:1px solid #a9a7a3;border-radius:7px;background:linear-gradient(90deg,#fdfdfd,#e9e8e6)"></div>
<div class="abs" style="left:922px;top:497px;width:4px;height:7px;background:repeating-linear-gradient(#a9a7a4 0 1px,transparent 1px 3px)"></div>
<svg class="ic" style="left:920px;top:175px" width="8" height="5"><path d="M0 4.500L3.500 0.500L7 4.500z" fill="#6e6c69"/></svg>
<svg class="ic" style="left:920px;top:816px" width="8" height="5"><path d="M0 0.500L3.500 4.500L7 0.500z" fill="#6e6c69"/></svg>
<div class="abs" style="left:308px;top:826px;width:609px;height:13px;border:1px solid #c4c2be;border-radius:7px;background:#f7f6f5"></div>
<div class="abs" style="left:320px;top:826px;width:585px;height:13px;border:1px solid #bebcb8;border-radius:7px;background:linear-gradient(#d8d6d3,#e3e1df)"></div>
<div class="abs" style="left:510px;top:826px;width:204px;height:13px;border:1px solid #a9a7a3;border-radius:7px;background:linear-gradient(#fdfdfd,#e9e8e6)"></div>
<div class="abs" style="left:608px;top:831px;width:7px;height:3px;background:repeating-linear-gradient(90deg,#a9a7a4 0 1px,transparent 1px 3px)"></div>
<svg class="ic" style="left:312px;top:829px" width="5" height="8"><path d="M4.500 0L0.500 3.500L4.500 7z" fill="#6e6c69"/></svg>
<svg class="ic" style="left:907px;top:829px" width="5" height="8"><path d="M0.500 0L4.500 3.500L0.500 7z" fill="#6e6c69"/></svg>



<!-- right panel -->
<div class="abs" style="left:932px;top:139px;width:1px;height:701px;background:#dfddda"></div>
<div class="abs" style="left:937px;top:139px;width:1px;height:701px;background:#c9c7c3"></div>
<div class="abs" style="left:1179px;top:139px;width:1px;height:701px;background:#c9c7c3"></div>
<svg class="ic" style="left:931px;top:470px" width="6" height="38"><path d="M1.500 2v4l3-2zM1.500 33v4l3-2z" fill="#111"/><path d="M2 10.500h1.500M2 14.500h1.500M2 18.500h1.500M2 22.500h1.500M2 26.500h1.500" stroke="#111" stroke-width="1.300"/></svg>
<div class="panel-title b" style="left:942px;top:146px;letter-spacing:.1px">Aufgabenbereich</div>
<div class="abs" style="left:1092px;top:147px;font:12.25px/15px 'Liberation Sans',sans-serif;color:#3c3c3c">Anzeige</div>
<div class="dd" style="left:1149px;top:152px;border-left-width:3px;border-right-width:3px;border-top-width:3.500px"></div>
<svg class="ic" style="left:1165px;top:148px" width="10" height="10"><path d="M1.5 1.5l7 7M8.500 1.5l-7 7" stroke="#4c4c4c" stroke-width="1.5"/></svg>
<div class="abs" style="left:941px;top:219px;width:235px;height:585px;background:#fff;border-left:1px solid #b9b6b1;border-right:1px solid #b9b6b1"></div>
<div class="sec" style="top:168px;height:18px"><svg class="ic" style="left:4px;top:4px" width="8" height="10"><path d="M1 0.800L6.500 5L1 9.200z" fill="#b9d3ea" stroke="#3a6ea5" stroke-width="1"/></svg><span>Masterfolien</span></div>
<div class="sec" style="top:185px;height:18px"><svg class="ic" style="left:4px;top:4px" width="8" height="10"><path d="M1 0.800L6.500 5L1 9.200z" fill="#b9d3ea" stroke="#3a6ea5" stroke-width="1"/></svg><span>Layouts</span></div>
<div class="sec" style="top:202px;height:18px"><svg class="ic" style="left:3px;top:5px" width="11" height="8"><path d="M1 1L9.200 1L5.100 6.300z" fill="#b9d3ea" stroke="#3a6ea5" stroke-width="1"/></svg><span class="b" style="letter-spacing:.3px;top:2px;font-size:15px;left:16.500px">Tabellen</span></div>
<div class="sec" style="top:803px;height:16px;border-top:none;border-bottom:none"><svg class="ic" style="left:4px;top:4px" width="8" height="10"><path d="M1 0.800L6.500 5L1 9.200z" fill="#b9d3ea" stroke="#3a6ea5" stroke-width="1"/></svg><span style="top:1px">Benutzerdefinierte Animation</span></div>
<div class="sec" style="top:818px;height:18px"><svg class="ic" style="left:4px;top:4px" width="8" height="10"><path d="M1 0.800L6.500 5L1 9.200z" fill="#b9d3ea" stroke="#3a6ea5" stroke-width="1"/></svg><span>Folienübergang</span></div>
<div class="abs" style="left:956px;top:228px;font-size:13.6px;line-height:17px;color:#3c3c3c">Designs</div>
<div class="hline" style="left:1015px;top:234px;width:154px;background:#a9a7a3"></div>
<svg class="ic" style="left:957px;top:251px" width="211" height="161" shape-rendering="crispEdges"><rect x="0" y="0" width="211" height="161" fill="#fff"/><rect x="0" y="0" width="211" height="1" fill="#111"/><rect x="0" y="0" width="1" height="161" fill="#111"/><rect x="210" y="0" width="1" height="161" fill="#e4e2df"/><rect x="0" y="160" width="211" height="1" fill="#e4e2df"/><rect x="9" y="6" width="10" height="5" fill="#c0c0c0"/><rect x="10" y="8" width="8" height="1" fill="#111"/><rect x="20" y="6" width="10" height="5" fill="#c0c0c0"/><rect x="21" y="8" width="8" height="1" fill="#111"/><rect x="31" y="6" width="10" height="5" fill="#c0c0c0"/><rect x="32" y="8" width="8" height="1" fill="#111"/><rect x="42" y="6" width="10" height="5" fill="#c0c0c0"/><rect x="43" y="8" width="8" height="1" fill="#111"/><rect x="53" y="6" width="10" height="5" fill="#c0c0c0"/><rect x="54" y="8" width="8" height="1" fill="#111"/><rect x="9" y="12" width="10" height="5" fill="#d4d4d4"/><rect x="10" y="14" width="8" height="1" fill="#111"/><rect x="20" y="12" width="10" height="5" fill="#d4d4d4"/><rect x="21" y="14" width="8" height="1" fill="#111"/><rect x="31" y="12" width="10" height="5" fill="#d4d4d4"/><rect x="32" y="14" width="8" height="1" fill="#111"/><rect x="42" y="12" width="10" height="5" fill="#d4d4d4"/><rect x="43" y="14" width="8" height="1" fill="#111"/><rect x="53" y="12" width="10" height="5" fill="#d4d4d4"/><rect x="54" y="14" width="8" height="1" fill="#111"/><rect x="9" y="18" width="10" height="5" fill="#f2f2f2"/><rect x="10" y="20" width="8" height="1" fill="#111"/><rect x="20" y="18" width="10" height="5" fill="#f2f2f2"/><rect x="21" y="20" width="8" height="1" fill="#111"/><rect x="31" y="18" width="10" height="5" fill="#f2f2f2"/><rect x="32" y="20" width="8" height="1" fill="#111"/><rect x="42" y="18" width="10" height="5" fill="#f2f2f2"/><rect x="43" y="20" width="8" height="1" fill="#111"/><rect x="53" y="18" width="10" height="5" fill="#f2f2f2"/><rect x="54" y="20" width="8" height="1" fill="#111"/><rect x="9" y="24" width="10" height="5" fill="#d4d4d4"/><rect x="10" y="26" width="8" height="1" fill="#111"/><rect x="20" y="24" width="10" height="5" fill="#d4d4d4"/><rect x="21" y="26" width="8" height="1" fill="#111"/><rect x="31" y="24" width="10" height="5" fill="#d4d4d4"/><rect x="32" y="26" width="8" height="1" fill="#111"/><rect x="42" y="24" width="10" height="5" fill="#d4d4d4"/><rect x="43" y="26" width="8" height="1" fill="#111"/><rect x="53" y="24" width="10" height="5" fill="#d4d4d4"/><rect x="54" y="26" width="8" height="1" fill="#111"/><rect x="9" y="30" width="10" height="5" fill="#f2f2f2"/><rect x="10" y="32" width="8" height="1" fill="#111"/><rect x="20" y="30" width="10" height="5" fill="#f2f2f2"/><rect x="21" y="32" width="8" height="1" fill="#111"/><rect x="31" y="30" width="10" height="5" fill="#f2f2f2"/><rect x="32" y="32" width="8" height="1" fill="#111"/><rect x="42" y="30" width="10" height="5" fill="#f2f2f2"/><rect x="43" y="32" width="8" height="1" fill="#111"/><rect x="53" y="30" width="10" height="5" fill="#f2f2f2"/><rect x="54" y="32" width="8" height="1" fill="#111"/><rect x="78" y="6" width="10" height="5" fill="#000000"/><rect x="89" y="6" width="10" height="5" fill="#000000"/><rect x="100" y="6" width="10" height="5" fill="#000000"/><rect x="111" y="6" width="10" height="5" fill="#000000"/><rect x="122" y="6" width="10" height="5" fill="#000000"/><rect x="78" y="12" width="10" height="5" fill="#ececec"/><rect x="79" y="14" width="8" height="1" fill="#111"/><rect x="89" y="12" width="10" height="5" fill="#ececec"/><rect x="90" y="14" width="8" height="1" fill="#111"/><rect x="100" y="12" width="10" height="5" fill="#ececec"/><rect x="101" y="14" width="8" height="1" fill="#111"/><rect x="111" y="12" width="10" height="5" fill="#ececec"/><rect x="112" y="14" width="8" height="1" fill="#111"/><rect x="122" y="12" width="10" height="5" fill="#ececec"/><rect x="123" y="14" width="8" height="1" fill="#111"/><rect x="78" y="18" width="10" height="5" fill="#ffffff"/><rect x="79" y="20" width="8" height="1" fill="#111"/><rect x="89" y="18" width="10" height="5" fill="#ffffff"/><rect x="90" y="20" width="8" height="1" fill="#111"/><rect x="100" y="18" width="10" height="5" fill="#ffffff"/><rect x="101" y="20" width="8" height="1" fill="#111"/><rect x="111" y="18" width="10" height="5" fill="#ffffff"/><rect x="112" y="20" width="8" height="1" fill="#111"/><rect x="122" y="18" width="10" height="5" fill="#ffffff"/><rect x="123" y="20" width="8" height="1" fill="#111"/><rect x="78" y="24" width="10" height="5" fill="#ececec"/><rect x="79" y="26" width="8" height="1" fill="#111"/><rect x="89" y="24" width="10" height="5" fill="#ececec"/><rect x="90" y="26" width="8" height="1" fill="#111"/><rect x="100" y="24" width="10" height="5" fill="#ececec"/><rect x="101" y="26" width="8" height="1" fill="#111"/><rect x="111" y="24" width="10" height="5" fill="#ececec"/><rect x="112" y="26" width="8" height="1" fill="#111"/><rect x="122" y="24" width="10" height="5" fill="#ececec"/><rect x="123" y="26" width="8" height="1" fill="#111"/><rect x="78" y="30" width="10" height="5" fill="#ffffff"/><rect x="79" y="32" width="8" height="1" fill="#111"/><rect x="89" y="30" width="10" height="5" fill="#ffffff"/><rect x="90" y="32" width="8" height="1" fill="#111"/><rect x="100" y="30" width="10" height="5" fill="#ffffff"/><rect x="101" y="32" width="8" height="1" fill="#111"/><rect x="111" y="30" width="10" height="5" fill="#ffffff"/><rect x="112" y="32" width="8" height="1" fill="#111"/><rect x="122" y="30" width="10" height="5" fill="#ffffff"/><rect x="123" y="32" width="8" height="1" fill="#111"/><rect x="147" y="6" width="10" height="5" fill="#ee5a2c"/><rect x="148" y="8" width="8" height="1" fill="#111"/><rect x="158" y="6" width="10" height="5" fill="#ee5a2c"/><rect x="159" y="8" width="8" height="1" fill="#111"/><rect x="169" y="6" width="10" height="5" fill="#ee5a2c"/><rect x="170" y="8" width="8" height="1" fill="#111"/><rect x="180" y="6" width="10" height="5" fill="#ee5a2c"/><rect x="181" y="8" width="8" height="1" fill="#111"/><rect x="191" y="6" width="10" height="5" fill="#ee5a2c"/><rect x="192" y="8" width="8" height="1" fill="#111"/><rect x="147" y="12" width="10" height="5" fill="#f79a6a"/><rect x="148" y="14" width="8" height="1" fill="#111"/><rect x="158" y="12" width="10" height="5" fill="#f79a6a"/><rect x="159" y="14" width="8" height="1" fill="#111"/><rect x="169" y="12" width="10" height="5" fill="#f79a6a"/><rect x="170" y="14" width="8" height="1" fill="#111"/><rect x="180" y="12" width="10" height="5" fill="#f79a6a"/><rect x="181" y="14" width="8" height="1" fill="#111"/><rect x="191" y="12" width="10" height="5" fill="#f79a6a"/><rect x="192" y="14" width="8" height="1" fill="#111"/><rect x="147" y="18" width="10" height="5" fill="#fbc59a"/><rect x="148" y="20" width="8" height="1" fill="#111"/><rect x="158" y="18" width="10" height="5" fill="#fbc59a"/><rect x="159" y="20" width="8" height="1" fill="#111"/><rect x="169" y="18" width="10" height="5" fill="#fbc59a"/><rect x="170" y="20" width="8" height="1" fill="#111"/><rect x="180" y="18" width="10" height="5" fill="#fbc59a"/><rect x="181" y="20" width="8" height="1" fill="#111"/><rect x="191" y="18" width="10" height="5" fill="#fbc59a"/><rect x="192" y="20" width="8" height="1" fill="#111"/><rect x="147" y="24" width="10" height="5" fill="#f79a6a"/><rect x="148" y="26" width="8" height="1" fill="#111"/><rect x="158" y="24" width="10" height="5" fill="#f79a6a"/><rect x="159" y="26" width="8" height="1" fill="#111"/><rect x="169" y="24" width="10" height="5" fill="#f79a6a"/><rect x="170" y="26" width="8" height="1" fill="#111"/><rect x="180" y="24" width="10" height="5" fill="#f79a6a"/><rect x="181" y="26" width="8" height="1" fill="#111"/><rect x="191" y="24" width="10" height="5" fill="#f79a6a"/><rect x="192" y="26" width="8" height="1" fill="#111"/><rect x="147" y="30" width="10" height="5" fill="#fbc59a"/><rect x="148" y="32" width="8" height="1" fill="#111"/><rect x="158" y="30" width="10" height="5" fill="#fbc59a"/><rect x="159" y="32" width="8" height="1" fill="#111"/><rect x="169" y="30" width="10" height="5" fill="#fbc59a"/><rect x="170" y="32" width="8" height="1" fill="#111"/><rect x="180" y="30" width="10" height="5" fill="#fbc59a"/><rect x="181" y="32" width="8" height="1" fill="#111"/><rect x="191" y="30" width="10" height="5" fill="#fbc59a"/><rect x="192" y="32" width="8" height="1" fill="#111"/><rect x="9" y="46" width="10" height="5" fill="#127a78"/><rect x="10" y="48" width="8" height="1" fill="#111"/><rect x="20" y="46" width="10" height="5" fill="#127a78"/><rect x="21" y="48" width="8" height="1" fill="#111"/><rect x="31" y="46" width="10" height="5" fill="#127a78"/><rect x="32" y="48" width="8" height="1" fill="#111"/><rect x="42" y="46" width="10" height="5" fill="#127a78"/><rect x="43" y="48" width="8" height="1" fill="#111"/><rect x="53" y="46" width="10" height="5" fill="#127a78"/><rect x="54" y="48" width="8" height="1" fill="#111"/><rect x="9" y="52" width="10" height="5" fill="#2fa39f"/><rect x="10" y="54" width="8" height="1" fill="#111"/><rect x="20" y="52" width="10" height="5" fill="#2fa39f"/><rect x="21" y="54" width="8" height="1" fill="#111"/><rect x="31" y="52" width="10" height="5" fill="#2fa39f"/><rect x="32" y="54" width="8" height="1" fill="#111"/><rect x="42" y="52" width="10" height="5" fill="#2fa39f"/><rect x="43" y="54" width="8" height="1" fill="#111"/><rect x="53" y="52" width="10" height="5" fill="#2fa39f"/><rect x="54" y="54" width="8" height="1" fill="#111"/><rect x="9" y="58" width="10" height="5" fill="#2fa39f"/><rect x="10" y="60" width="8" height="1" fill="#111"/><rect x="20" y="58" width="10" height="5" fill="#2fa39f"/><rect x="21" y="60" width="8" height="1" fill="#111"/><rect x="31" y="58" width="10" height="5" fill="#2fa39f"/><rect x="32" y="60" width="8" height="1" fill="#111"/><rect x="42" y="58" width="10" height="5" fill="#2fa39f"/><rect x="43" y="60" width="8" height="1" fill="#111"/><rect x="53" y="58" width="10" height="5" fill="#2fa39f"/><rect x="54" y="60" width="8" height="1" fill="#111"/><rect x="9" y="64" width="10" height="5" fill="#2fa39f"/><rect x="10" y="66" width="8" height="1" fill="#111"/><rect x="20" y="64" width="10" height="5" fill="#2fa39f"/><rect x="21" y="66" width="8" height="1" fill="#111"/><rect x="31" y="64" width="10" height="5" fill="#2fa39f"/><rect x="32" y="66" width="8" height="1" fill="#111"/><rect x="42" y="64" width="10" height="5" fill="#2fa39f"/><rect x="43" y="66" width="8" height="1" fill="#111"/><rect x="53" y="64" width="10" height="5" fill="#2fa39f"/><rect x="54" y="66" width="8" height="1" fill="#111"/><rect x="9" y="70" width="10" height="5" fill="#2fa39f"/><rect x="10" y="72" width="8" height="1" fill="#111"/><rect x="20" y="70" width="10" height="5" fill="#2fa39f"/><rect x="21" y="72" width="8" height="1" fill="#111"/><rect x="31" y="70" width="10" height="5" fill="#2fa39f"/><rect x="32" y="72" width="8" height="1" fill="#111"/><rect x="42" y="70" width="10" height="5" fill="#2fa39f"/><rect x="43" y="72" width="8" height="1" fill="#111"/><rect x="53" y="70" width="10" height="5" fill="#2fa39f"/><rect x="54" y="72" width="8" height="1" fill="#111"/><rect x="78" y="46" width="10" height="5" fill="#0a4fa8"/><rect x="79" y="48" width="8" height="1" fill="#111"/><rect x="89" y="46" width="10" height="5" fill="#0a4fa8"/><rect x="90" y="48" width="8" height="1" fill="#111"/><rect x="100" y="46" width="10" height="5" fill="#0a4fa8"/><rect x="101" y="48" width="8" height="1" fill="#111"/><rect x="111" y="46" width="10" height="5" fill="#0a4fa8"/><rect x="112" y="48" width="8" height="1" fill="#111"/><rect x="122" y="46" width="10" height="5" fill="#0a4fa8"/><rect x="123" y="48" width="8" height="1" fill="#111"/><rect x="78" y="52" width="10" height="5" fill="#0a8fe6"/><rect x="79" y="54" width="8" height="1" fill="#111"/><rect x="89" y="52" width="10" height="5" fill="#0a8fe6"/><rect x="90" y="54" width="8" height="1" fill="#111"/><rect x="100" y="52" width="10" height="5" fill="#0a8fe6"/><rect x="101" y="54" width="8" height="1" fill="#111"/><rect x="111" y="52" width="10" height="5" fill="#0a8fe6"/><rect x="112" y="54" width="8" height="1" fill="#111"/><rect x="122" y="52" width="10" height="5" fill="#0a8fe6"/><rect x="123" y="54" width="8" height="1" fill="#111"/><rect x="78" y="58" width="10" height="5" fill="#a9cdf3"/><rect x="79" y="60" width="8" height="1" fill="#111"/><rect x="89" y="58" width="10" height="5" fill="#a9cdf3"/><rect x="90" y="60" width="8" height="1" fill="#111"/><rect x="100" y="58" width="10" height="5" fill="#a9cdf3"/><rect x="101" y="60" width="8" height="1" fill="#111"/><rect x="111" y="58" width="10" height="5" fill="#a9cdf3"/><rect x="112" y="60" width="8" height="1" fill="#111"/><rect x="122" y="58" width="10" height="5" fill="#a9cdf3"/><rect x="123" y="60" width="8" height="1" fill="#111"/><rect x="78" y="64" width="10" height="5" fill="#0a8fe6"/><rect x="79" y="66" width="8" height="1" fill="#111"/><rect x="89" y="64" width="10" height="5" fill="#0a8fe6"/><rect x="90" y="66" width="8" height="1" fill="#111"/><rect x="100" y="64" width="10" height="5" fill="#0a8fe6"/><rect x="101" y="66" width="8" height="1" fill="#111"/><rect x="111" y="64" width="10" height="5" fill="#0a8fe6"/><rect x="112" y="66" width="8" height="1" fill="#111"/><rect x="122" y="64" width="10" height="5" fill="#0a8fe6"/><rect x="123" y="66" width="8" height="1" fill="#111"/><rect x="78" y="70" width="10" height="5" fill="#a9cdf3"/><rect x="79" y="72" width="8" height="1" fill="#111"/><rect x="89" y="70" width="10" height="5" fill="#a9cdf3"/><rect x="90" y="72" width="8" height="1" fill="#111"/><rect x="100" y="70" width="10" height="5" fill="#a9cdf3"/><rect x="101" y="72" width="8" height="1" fill="#111"/><rect x="111" y="70" width="10" height="5" fill="#a9cdf3"/><rect x="112" y="72" width="8" height="1" fill="#111"/><rect x="122" y="70" width="10" height="5" fill="#a9cdf3"/><rect x="123" y="72" width="8" height="1" fill="#111"/><rect x="147" y="46" width="10" height="5" fill="#a79ff0"/><rect x="148" y="48" width="8" height="1" fill="#111"/><rect x="158" y="46" width="10" height="5" fill="#a79ff0"/><rect x="159" y="48" width="8" height="1" fill="#111"/><rect x="169" y="46" width="10" height="5" fill="#a79ff0"/><rect x="170" y="48" width="8" height="1" fill="#111"/><rect x="180" y="46" width="10" height="5" fill="#a79ff0"/><rect x="181" y="48" width="8" height="1" fill="#111"/><rect x="191" y="46" width="10" height="5" fill="#a79ff0"/><rect x="192" y="48" width="8" height="1" fill="#111"/><rect x="147" y="52" width="10" height="5" fill="#dedcfb"/><rect x="148" y="54" width="8" height="1" fill="#111"/><rect x="158" y="52" width="10" height="5" fill="#dedcfb"/><rect x="159" y="54" width="8" height="1" fill="#111"/><rect x="169" y="52" width="10" height="5" fill="#dedcfb"/><rect x="170" y="54" width="8" height="1" fill="#111"/><rect x="180" y="52" width="10" height="5" fill="#dedcfb"/><rect x="181" y="54" width="8" height="1" fill="#111"/><rect x="191" y="52" width="10" height="5" fill="#dedcfb"/><rect x="192" y="54" width="8" height="1" fill="#111"/><rect x="147" y="58" width="10" height="5" fill="#f6f5ff"/><rect x="148" y="60" width="8" height="1" fill="#111"/><rect x="158" y="58" width="10" height="5" fill="#f6f5ff"/><rect x="159" y="60" width="8" height="1" fill="#111"/><rect x="169" y="58" width="10" height="5" fill="#f6f5ff"/><rect x="170" y="60" width="8" height="1" fill="#111"/><rect x="180" y="58" width="10" height="5" fill="#f6f5ff"/><rect x="181" y="60" width="8" height="1" fill="#111"/><rect x="191" y="58" width="10" height="5" fill="#f6f5ff"/><rect x="192" y="60" width="8" height="1" fill="#111"/><rect x="147" y="64" width="10" height="5" fill="#dedcfb"/><rect x="148" y="66" width="8" height="1" fill="#111"/><rect x="158" y="64" width="10" height="5" fill="#dedcfb"/><rect x="159" y="66" width="8" height="1" fill="#111"/><rect x="169" y="64" width="10" height="5" fill="#dedcfb"/><rect x="170" y="66" width="8" height="1" fill="#111"/><rect x="180" y="64" width="10" height="5" fill="#dedcfb"/><rect x="181" y="66" width="8" height="1" fill="#111"/><rect x="191" y="64" width="10" height="5" fill="#dedcfb"/><rect x="192" y="66" width="8" height="1" fill="#111"/><rect x="147" y="70" width="10" height="5" fill="#f6f5ff"/><rect x="148" y="72" width="8" height="1" fill="#111"/><rect x="158" y="70" width="10" height="5" fill="#f6f5ff"/><rect x="159" y="72" width="8" height="1" fill="#111"/><rect x="169" y="70" width="10" height="5" fill="#f6f5ff"/><rect x="170" y="72" width="8" height="1" fill="#111"/><rect x="180" y="70" width="10" height="5" fill="#f6f5ff"/><rect x="181" y="72" width="8" height="1" fill="#111"/><rect x="191" y="70" width="10" height="5" fill="#f6f5ff"/><rect x="192" y="72" width="8" height="1" fill="#111"/><rect x="9" y="86" width="10" height="5" fill="#c8602f"/><rect x="10" y="88" width="8" height="1" fill="#111"/><rect x="20" y="86" width="10" height="5" fill="#c8602f"/><rect x="21" y="88" width="8" height="1" fill="#111"/><rect x="31" y="86" width="10" height="5" fill="#c8602f"/><rect x="32" y="88" width="8" height="1" fill="#111"/><rect x="42" y="86" width="10" height="5" fill="#c8602f"/><rect x="43" y="88" width="8" height="1" fill="#111"/><rect x="53" y="86" width="10" height="5" fill="#c8602f"/><rect x="54" y="88" width="8" height="1" fill="#111"/><rect x="9" y="92" width="10" height="5" fill="#fdcf9f"/><rect x="10" y="94" width="8" height="1" fill="#111"/><rect x="20" y="92" width="10" height="5" fill="#fdcf9f"/><rect x="21" y="94" width="8" height="1" fill="#111"/><rect x="31" y="92" width="10" height="5" fill="#fdcf9f"/><rect x="32" y="94" width="8" height="1" fill="#111"/><rect x="42" y="92" width="10" height="5" fill="#fdcf9f"/><rect x="43" y="94" width="8" height="1" fill="#111"/><rect x="53" y="92" width="10" height="5" fill="#fdcf9f"/><rect x="54" y="94" width="8" height="1" fill="#111"/><rect x="9" y="98" width="10" height="5" fill="#ffffd6"/><rect x="10" y="100" width="8" height="1" fill="#111"/><rect x="20" y="98" width="10" height="5" fill="#ffffd6"/><rect x="21" y="100" width="8" height="1" fill="#111"/><rect x="31" y="98" width="10" height="5" fill="#ffffd6"/><rect x="32" y="100" width="8" height="1" fill="#111"/><rect x="42" y="98" width="10" height="5" fill="#ffffd6"/><rect x="43" y="100" width="8" height="1" fill="#111"/><rect x="53" y="98" width="10" height="5" fill="#ffffd6"/><rect x="54" y="100" width="8" height="1" fill="#111"/><rect x="9" y="104" width="10" height="5" fill="#fdcf9f"/><rect x="10" y="106" width="8" height="1" fill="#111"/><rect x="20" y="104" width="10" height="5" fill="#fdcf9f"/><rect x="21" y="106" width="8" height="1" fill="#111"/><rect x="31" y="104" width="10" height="5" fill="#fdcf9f"/><rect x="32" y="106" width="8" height="1" fill="#111"/><rect x="42" y="104" width="10" height="5" fill="#fdcf9f"/><rect x="43" y="106" width="8" height="1" fill="#111"/><rect x="53" y="104" width="10" height="5" fill="#fdcf9f"/><rect x="54" y="106" width="8" height="1" fill="#111"/><rect x="9" y="110" width="10" height="5" fill="#ffffd6"/><rect x="10" y="112" width="8" height="1" fill="#111"/><rect x="20" y="110" width="10" height="5" fill="#ffffd6"/><rect x="21" y="112" width="8" height="1" fill="#111"/><rect x="31" y="110" width="10" height="5" fill="#ffffd6"/><rect x="32" y="112" width="8" height="1" fill="#111"/><rect x="42" y="110" width="10" height="5" fill="#ffffd6"/><rect x="43" y="112" width="8" height="1" fill="#111"/><rect x="53" y="110" width="10" height="5" fill="#ffffd6"/><rect x="54" y="112" width="8" height="1" fill="#111"/><rect x="78" y="86" width="10" height="5" fill="#4f7a1f"/><rect x="79" y="88" width="8" height="1" fill="#111"/><rect x="89" y="86" width="10" height="5" fill="#4f7a1f"/><rect x="90" y="88" width="8" height="1" fill="#111"/><rect x="100" y="86" width="10" height="5" fill="#4f7a1f"/><rect x="101" y="88" width="8" height="1" fill="#111"/><rect x="111" y="86" width="10" height="5" fill="#4f7a1f"/><rect x="112" y="88" width="8" height="1" fill="#111"/><rect x="122" y="86" width="10" height="5" fill="#4f7a1f"/><rect x="123" y="88" width="8" height="1" fill="#111"/><rect x="78" y="92" width="10" height="5" fill="#8ab052"/><rect x="79" y="94" width="8" height="1" fill="#111"/><rect x="89" y="92" width="10" height="5" fill="#8ab052"/><rect x="90" y="94" width="8" height="1" fill="#111"/><rect x="100" y="92" width="10" height="5" fill="#8ab052"/><rect x="101" y="94" width="8" height="1" fill="#111"/><rect x="111" y="92" width="10" height="5" fill="#8ab052"/><rect x="112" y="94" width="8" height="1" fill="#111"/><rect x="122" y="92" width="10" height="5" fill="#8ab052"/><rect x="123" y="94" width="8" height="1" fill="#111"/><rect x="78" y="98" width="10" height="5" fill="#ffffd2"/><rect x="79" y="100" width="8" height="1" fill="#111"/><rect x="89" y="98" width="10" height="5" fill="#ffffd2"/><rect x="90" y="100" width="8" height="1" fill="#111"/><rect x="100" y="98" width="10" height="5" fill="#ffffd2"/><rect x="101" y="100" width="8" height="1" fill="#111"/><rect x="111" y="98" width="10" height="5" fill="#ffffd2"/><rect x="112" y="100" width="8" height="1" fill="#111"/><rect x="122" y="98" width="10" height="5" fill="#ffffd2"/><rect x="123" y="100" width="8" height="1" fill="#111"/><rect x="78" y="104" width="10" height="5" fill="#8ab052"/><rect x="79" y="106" width="8" height="1" fill="#111"/><rect x="89" y="104" width="10" height="5" fill="#8ab052"/><rect x="90" y="106" width="8" height="1" fill="#111"/><rect x="100" y="104" width="10" height="5" fill="#8ab052"/><rect x="101" y="106" width="8" height="1" fill="#111"/><rect x="111" y="104" width="10" height="5" fill="#8ab052"/><rect x="112" y="106" width="8" height="1" fill="#111"/><rect x="122" y="104" width="10" height="5" fill="#8ab052"/><rect x="123" y="106" width="8" height="1" fill="#111"/><rect x="78" y="110" width="10" height="5" fill="#ffffd2"/><rect x="79" y="112" width="8" height="1" fill="#111"/><rect x="89" y="110" width="10" height="5" fill="#ffffd2"/><rect x="90" y="112" width="8" height="1" fill="#111"/><rect x="100" y="110" width="10" height="5" fill="#ffffd2"/><rect x="101" y="112" width="8" height="1" fill="#111"/><rect x="111" y="110" width="10" height="5" fill="#ffffd2"/><rect x="112" y="112" width="8" height="1" fill="#111"/><rect x="122" y="110" width="10" height="5" fill="#ffffd2"/><rect x="123" y="112" width="8" height="1" fill="#111"/><rect x="147" y="86" width="10" height="5" fill="#2f9290"/><rect x="148" y="88" width="8" height="1" fill="#111"/><rect x="158" y="86" width="10" height="5" fill="#2f9290"/><rect x="159" y="88" width="8" height="1" fill="#111"/><rect x="169" y="86" width="10" height="5" fill="#2f9290"/><rect x="170" y="88" width="8" height="1" fill="#111"/><rect x="180" y="86" width="10" height="5" fill="#2f9290"/><rect x="181" y="88" width="8" height="1" fill="#111"/><rect x="191" y="86" width="10" height="5" fill="#2f9290"/><rect x="192" y="88" width="8" height="1" fill="#111"/><rect x="147" y="92" width="10" height="5" fill="#45a9a7"/><rect x="148" y="94" width="8" height="1" fill="#111"/><rect x="158" y="92" width="10" height="5" fill="#45a9a7"/><rect x="159" y="94" width="8" height="1" fill="#111"/><rect x="169" y="92" width="10" height="5" fill="#45a9a7"/><rect x="170" y="94" width="8" height="1" fill="#111"/><rect x="180" y="92" width="10" height="5" fill="#45a9a7"/><rect x="181" y="94" width="8" height="1" fill="#111"/><rect x="191" y="92" width="10" height="5" fill="#45a9a7"/><rect x="192" y="94" width="8" height="1" fill="#111"/><rect x="147" y="98" width="10" height="5" fill="#d6ffff"/><rect x="148" y="100" width="8" height="1" fill="#111"/><rect x="158" y="98" width="10" height="5" fill="#d6ffff"/><rect x="159" y="100" width="8" height="1" fill="#111"/><rect x="169" y="98" width="10" height="5" fill="#d6ffff"/><rect x="170" y="100" width="8" height="1" fill="#111"/><rect x="180" y="98" width="10" height="5" fill="#d6ffff"/><rect x="181" y="100" width="8" height="1" fill="#111"/><rect x="191" y="98" width="10" height="5" fill="#d6ffff"/><rect x="192" y="100" width="8" height="1" fill="#111"/><rect x="147" y="104" width="10" height="5" fill="#45a9a7"/><rect x="148" y="106" width="8" height="1" fill="#111"/><rect x="158" y="104" width="10" height="5" fill="#45a9a7"/><rect x="159" y="106" width="8" height="1" fill="#111"/><rect x="169" y="104" width="10" height="5" fill="#45a9a7"/><rect x="170" y="106" width="8" height="1" fill="#111"/><rect x="180" y="104" width="10" height="5" fill="#45a9a7"/><rect x="181" y="106" width="8" height="1" fill="#111"/><rect x="191" y="104" width="10" height="5" fill="#45a9a7"/><rect x="192" y="106" width="8" height="1" fill="#111"/><rect x="147" y="110" width="10" height="5" fill="#d6ffff"/><rect x="148" y="112" width="8" height="1" fill="#111"/><rect x="158" y="110" width="10" height="5" fill="#d6ffff"/><rect x="159" y="112" width="8" height="1" fill="#111"/><rect x="169" y="110" width="10" height="5" fill="#d6ffff"/><rect x="170" y="112" width="8" height="1" fill="#111"/><rect x="180" y="110" width="10" height="5" fill="#d6ffff"/><rect x="181" y="112" width="8" height="1" fill="#111"/><rect x="191" y="110" width="10" height="5" fill="#d6ffff"/><rect x="192" y="112" width="8" height="1" fill="#111"/><rect x="9" y="126" width="10" height="5" fill="#a3a3d4"/><rect x="10" y="128" width="8" height="1" fill="#111"/><rect x="20" y="126" width="10" height="5" fill="#a3a3d4"/><rect x="21" y="128" width="8" height="1" fill="#111"/><rect x="31" y="126" width="10" height="5" fill="#a3a3d4"/><rect x="32" y="128" width="8" height="1" fill="#111"/><rect x="42" y="126" width="10" height="5" fill="#a3a3d4"/><rect x="43" y="128" width="8" height="1" fill="#111"/><rect x="53" y="126" width="10" height="5" fill="#a3a3d4"/><rect x="54" y="128" width="8" height="1" fill="#111"/><rect x="9" y="132" width="10" height="5" fill="#e6e6fb"/><rect x="10" y="134" width="8" height="1" fill="#111"/><rect x="20" y="132" width="10" height="5" fill="#e6e6fb"/><rect x="21" y="134" width="8" height="1" fill="#111"/><rect x="31" y="132" width="10" height="5" fill="#e6e6fb"/><rect x="32" y="134" width="8" height="1" fill="#111"/><rect x="42" y="132" width="10" height="5" fill="#e6e6fb"/><rect x="43" y="134" width="8" height="1" fill="#111"/><rect x="53" y="132" width="10" height="5" fill="#e6e6fb"/><rect x="54" y="134" width="8" height="1" fill="#111"/><rect x="9" y="138" width="10" height="5" fill="#ffffff"/><rect x="10" y="140" width="8" height="1" fill="#111"/><rect x="20" y="138" width="10" height="5" fill="#ffffff"/><rect x="21" y="140" width="8" height="1" fill="#111"/><rect x="31" y="138" width="10" height="5" fill="#ffffff"/><rect x="32" y="140" width="8" height="1" fill="#111"/><rect x="42" y="138" width="10" height="5" fill="#ffffff"/><rect x="43" y="140" width="8" height="1" fill="#111"/><rect x="53" y="138" width="10" height="5" fill="#ffffff"/><rect x="54" y="140" width="8" height="1" fill="#111"/><rect x="9" y="144" width="10" height="5" fill="#e6e6fb"/><rect x="10" y="146" width="8" height="1" fill="#111"/><rect x="20" y="144" width="10" height="5" fill="#e6e6fb"/><rect x="21" y="146" width="8" height="1" fill="#111"/><rect x="31" y="144" width="10" height="5" fill="#e6e6fb"/><rect x="32" y="146" width="8" height="1" fill="#111"/><rect x="42" y="144" width="10" height="5" fill="#e6e6fb"/><rect x="43" y="146" width="8" height="1" fill="#111"/><rect x="53" y="144" width="10" height="5" fill="#e6e6fb"/><rect x="54" y="146" width="8" height="1" fill="#111"/><rect x="9" y="150" width="10" height="5" fill="#ffffff"/><rect x="10" y="152" width="8" height="1" fill="#111"/><rect x="20" y="150" width="10" height="5" fill="#ffffff"/><rect x="21" y="152" width="8" height="1" fill="#111"/><rect x="31" y="150" width="10" height="5" fill="#ffffff"/><rect x="32" y="152" width="8" height="1" fill="#111"/><rect x="42" y="150" width="10" height="5" fill="#ffffff"/><rect x="43" y="152" width="8" height="1" fill="#111"/><rect x="53" y="150" width="10" height="5" fill="#ffffff"/><rect x="54" y="152" width="8" height="1" fill="#111"/><rect x="78" y="126" width="10" height="5" fill="#fdd0a2"/><rect x="79" y="128" width="8" height="1" fill="#111"/><rect x="89" y="126" width="10" height="5" fill="#fdd0a2"/><rect x="90" y="128" width="8" height="1" fill="#111"/><rect x="100" y="126" width="10" height="5" fill="#fdd0a2"/><rect x="101" y="128" width="8" height="1" fill="#111"/><rect x="111" y="126" width="10" height="5" fill="#fdd0a2"/><rect x="112" y="128" width="8" height="1" fill="#111"/><rect x="122" y="126" width="10" height="5" fill="#fdd0a2"/><rect x="123" y="128" width="8" height="1" fill="#111"/><rect x="78" y="132" width="10" height="5" fill="#ffffa6"/><rect x="79" y="134" width="8" height="1" fill="#111"/><rect x="89" y="132" width="10" height="5" fill="#ffffa6"/><rect x="90" y="134" width="8" height="1" fill="#111"/><rect x="100" y="132" width="10" height="5" fill="#ffffa6"/><rect x="101" y="134" width="8" height="1" fill="#111"/><rect x="111" y="132" width="10" height="5" fill="#ffffa6"/><rect x="112" y="134" width="8" height="1" fill="#111"/><rect x="122" y="132" width="10" height="5" fill="#ffffa6"/><rect x="123" y="134" width="8" height="1" fill="#111"/><rect x="78" y="138" width="10" height="5" fill="#ffffd8"/><rect x="79" y="140" width="8" height="1" fill="#111"/><rect x="89" y="138" width="10" height="5" fill="#ffffd8"/><rect x="90" y="140" width="8" height="1" fill="#111"/><rect x="100" y="138" width="10" height="5" fill="#ffffd8"/><rect x="101" y="140" width="8" height="1" fill="#111"/><rect x="111" y="138" width="10" height="5" fill="#ffffd8"/><rect x="112" y="140" width="8" height="1" fill="#111"/><rect x="122" y="138" width="10" height="5" fill="#ffffd8"/><rect x="123" y="140" width="8" height="1" fill="#111"/><rect x="78" y="144" width="10" height="5" fill="#ffffa6"/><rect x="79" y="146" width="8" height="1" fill="#111"/><rect x="89" y="144" width="10" height="5" fill="#ffffa6"/><rect x="90" y="146" width="8" height="1" fill="#111"/><rect x="100" y="144" width="10" height="5" fill="#ffffa6"/><rect x="101" y="146" width="8" height="1" fill="#111"/><rect x="111" y="144" width="10" height="5" fill="#ffffa6"/><rect x="112" y="146" width="8" height="1" fill="#111"/><rect x="122" y="144" width="10" height="5" fill="#ffffa6"/><rect x="123" y="146" width="8" height="1" fill="#111"/><rect x="78" y="150" width="10" height="5" fill="#ffffd8"/><rect x="79" y="152" width="8" height="1" fill="#111"/><rect x="89" y="150" width="10" height="5" fill="#ffffd8"/><rect x="90" y="152" width="8" height="1" fill="#111"/><rect x="100" y="150" width="10" height="5" fill="#ffffd8"/><rect x="101" y="152" width="8" height="1" fill="#111"/><rect x="111" y="150" width="10" height="5" fill="#ffffd8"/><rect x="112" y="152" width="8" height="1" fill="#111"/><rect x="122" y="150" width="10" height="5" fill="#ffffd8"/><rect x="123" y="152" width="8" height="1" fill="#111"/></svg>
<div class="abs" style="left:949px;top:424px;font-size:13.8px;line-height:17px;color:#3c3c3c">Anzeigen</div>
<div class="hline" style="left:1018px;top:430px;width:151px;background:#a9a7a3"></div>
<div class="cb on" style="top:451px"></div><div class="cbl" style="top:450px">Kopfzeile</div>
<div class="cb" style="top:479px"></div><div class="cbl" style="top:478px">Summenzeile</div>
<div class="cb on" style="top:506px"></div><div class="cbl" style="top:505px">Alternierende Zeilen</div>
<div class="cb" style="top:534px"></div><div class="cbl" style="top:533px">Erste Spalte</div>
<div class="cb" style="top:562px"></div><div class="cbl" style="top:561px">Letzte Spalte</div>
<div class="cb" style="top:591px"></div><div class="cbl" style="top:590px">Alternierende Spalten</div>
<svg class="ic" style="left:959px;top:449px" width="16" height="16"><path d="M3.200 8l3.300 4.200L14.800 2.800" fill="none" stroke="#4a2a1c" stroke-width="2.100"/></svg>
<svg class="ic" style="left:959px;top:504px" width="16" height="16"><path d="M3.200 8l3.300 4.200L14.800 2.800" fill="none" stroke="#4a2a1c" stroke-width="2.100"/></svg>


<!-- draw toolbar + status bar -->
<div class="hline" style="left:1px;top:839px;width:931px;background:#d9d7d4"></div><div class="hline" style="left:932px;top:839px;width:249px;background:#bdbbb7"></div>
<div class="abs" style="left:1px;top:840px;width:1180px;height:40px;background:linear-gradient(#f6f5f4,#f0efee)"></div>
<div class="hline" style="left:1px;top:880px;width:1180px;background:#dddbd8"></div>
<div class="abs" style="left:1px;top:881px;width:1180px;height:21px;background:#f2f1f0"></div>
<div class="abs" style="left:0;top:902px;width:1182px;height:2px;background:#8a8884"></div>
<!--TB3S--><div class="handle" style="left:4px;top:858px"></div>
<div class="abs" style="left:16px;top:844px;width:31px;height:33px;border:1px solid #aeaca8;border-radius:4px;background:linear-gradient(#cfcdca,#dad8d5)"></div>
<svg class="ic" style="left:25px;top:849px" width="14" height="22" viewBox="0 0 14 22" ><path d="M1.500 1.500v15l3.500-3.200l2.800 6.200l2.500-1.100l-2.800-6l4.800-.4z" fill="#fff" stroke="#000" stroke-width="1.300" stroke-linejoin="round"/></svg>
<div class="vsep" style="left:51px;top:849px;height:22px"></div>
<svg class="ic" style="left:62px;top:849px" width="20" height="20" viewBox="0 0 20 20" ><path d="M1.500 18.500L18.800 1.200" stroke="#222" stroke-width="1.200"/></svg>
<svg class="ic" style="left:94px;top:854px" width="21" height="12" viewBox="0 0 21 12" ><path d="M1 5.700h15" stroke="#000" stroke-width="1.300"/><path d="M20 5.700l-6.500-3.200l1.500 3.200l-1.500 3.200z" fill="#000"/></svg>
<svg class="ic" style="left:126px;top:851px" width="22" height="17" viewBox="0 0 22 17" ><rect x="1.500" y="1.500" width="19" height="14" fill="url(#gBtn)" stroke="#333" stroke-width="1.100"/></svg>
<svg class="ic" style="left:159px;top:851px" width="23" height="17" viewBox="0 0 23 17" ><ellipse cx="11.500" cy="8.500" rx="10" ry="6.700" fill="url(#gBtn)" stroke="#333" stroke-width="1.100"/></svg>
<div class="abs" style="left:196px;top:845px;width:17px;text-align:center;font:bold 23px/28px 'Liberation Serif',serif;color:#120c04">T</div>
<div class="vsep" style="left:224px;top:849px;height:22px"></div>
<svg class="ic" style="left:231px;top:847px" width="27" height="23" viewBox="0 0 27 23" ><path d="M1.500 2.500c6 2 8 6 8 9.500c0 4 2 7.500 4.500 7.500l1.500-.5v1.500h-14z" fill="url(#gBlue)"/><path d="M1.500 2.500c6 2 8 6 8 9.500c0 4 2 7.500 4.500 7.500" fill="none" stroke="#111" stroke-width="1.200"/><path d="M14 19.500l1.500-4.500l7-12.500l3 1.700l-7 12.500z" fill="#e8b070" stroke="#5a3a1a" stroke-width=".9" stroke-linejoin="round"/><path d="M22.500 2.500l3 1.700l-1.200 2.200l-3-1.700z" fill="#d83a2a"/><path d="M14 19.500l.8-2.500l1.500.9z" fill="#222"/></svg>
<div class="dd" style="left:266px;top:858px"></div>
<svg class="ic" style="left:283px;top:849px" width="21" height="21" viewBox="0 0 21 21" ><path d="M5 3.500h5.500v13.500h5.500" fill="none" stroke="#111" stroke-width="1.300"/><rect x="1.500" y="1.500" width="4" height="4" fill="#fff" stroke="#111"/><rect x="15.500" y="15" width="4" height="4" rx="1.500" fill="#fff" stroke="#111"/></svg>
<div class="dd" style="left:316px;top:858px"></div>
<svg class="ic" style="left:333px;top:849px" width="23" height="23" viewBox="0 0 23 23" ><path d="M11.300 1l10.200 10.200l-10.200 10.200l-10.200-10.200z" fill="url(#gBtn)" stroke="#555" stroke-width="1"/></svg>
<div class="dd" style="left:366px;top:858px"></div>
<svg class="ic" style="left:382px;top:848px" width="24" height="24" viewBox="0 0 24 24" ><circle cx="12" cy="12" r="10.400" fill="url(#gSmile)" stroke="#666" stroke-width="1"/><ellipse cx="10" cy="7" rx="5.500" ry="3.500" fill="#fff" opacity=".8"/><circle cx="8.500" cy="10.500" r=".9" fill="#aaa"/><circle cx="15.500" cy="10.500" r=".9" fill="#aaa"/><path d="M7.500 15c2.500 2.500 6.500 2.500 9 0" fill="none" stroke="#aaa" stroke-width=".9"/></svg>
<div class="dd" style="left:416px;top:858px"></div>
<svg class="ic" style="left:431px;top:852px" width="26" height="17" viewBox="0 0 26 17" ><path d="M1 8.200l7-7v4h9v-4l7 7l-7 7v-4h-9v4z" fill="url(#gBtn)" stroke="#444" stroke-width="1" stroke-linejoin="round"/></svg>
<div class="dd" style="left:466px;top:858px"></div>
<svg class="ic" style="left:482px;top:848px" width="24" height="24" viewBox="0 0 24 24" ><rect x="1.500" y="1.500" width="21" height="21" fill="url(#gBtn)" stroke="#222" stroke-width="1.300"/><path d="M7 2v20M2 7h20" stroke="#fff" stroke-width="1" opacity=".8"/></svg>
<div class="dd" style="left:516px;top:858px"></div>
<svg class="ic" style="left:531px;top:848px" width="25" height="24" viewBox="0 0 25 24" ><path d="M4.500 1.500h16c1.700 0 3 1.300 3 3v9c0 1.700-1.300 3-3 3h-9.500l-9 5l4.500-5h-2c-1.700 0-3-1.300-3-3v-9c0-1.700 1.300-3 3-3z" fill="url(#gBtn)" stroke="#444" stroke-width="1.100" stroke-linejoin="round"/></svg>
<div class="dd" style="left:566px;top:858px"></div>
<svg class="ic" style="left:582px;top:848px" width="25" height="24" viewBox="0 0 25 24" ><path d="M12 1.200l2.700 8.300h8.700l-7 5.200l2.700 8.300l-7.100-5.100l-7.100 5.100l2.700-8.300l-7-5.200h8.700z" fill="#e9e9e9" stroke="#444" stroke-width="1.100" stroke-linejoin="round"/></svg>
<div class="dd" style="left:616px;top:858px"></div>
<div class="vsep" style="left:632px;top:849px;height:22px"></div>
<svg class="ic" style="left:640px;top:847px" width="24" height="24" viewBox="0 0 24 24" ><path d="M5.5 4L14.5 1.8L21 8.5L17.5 21L2.5 19.5L8.5 12.5z" fill="none" stroke="#111" stroke-width="1.100"/><rect x="4.1" y="2.6" width="2.800" height="2.800" fill="#fff" stroke="#111" stroke-width=".9"/><rect x="13.1" y="0.4" width="2.800" height="2.800" fill="#fff" stroke="#111" stroke-width=".9"/><rect x="19.6" y="7.1" width="2.800" height="2.800" fill="#fff" stroke="#111" stroke-width=".9"/><rect x="16.1" y="19.6" width="2.800" height="2.800" fill="#fff" stroke="#111" stroke-width=".9"/><rect x="1.1" y="18.1" width="2.800" height="2.800" fill="#fff" stroke="#111" stroke-width=".9"/><rect x="7.1" y="11.1" width="2.800" height="2.800" fill="#fff" stroke="#111" stroke-width=".9"/></svg>
<svg class="ic" style="left:676px;top:847px" width="23" height="26" viewBox="0 0 23 26" ><path d="M12.500 3.500l5-2.500l4.500 6.500l-4.500 3z" fill="#e8a060" stroke="#6a3a1a" stroke-width=".9" stroke-linejoin="round"/><path d="M11 4.500l7.500 7.500l-8 6l-5-6z" fill="#8a3a1a" stroke="#4a1e0a" stroke-width=".9" stroke-linejoin="round"/><path d="M5.500 12l5 6l-4.500 2.500l-2.500-3z" fill="#c9c9c9" stroke="#555" stroke-width=".8"/><path d="M3.500 17.500l2.500 3l-3 1.500z" fill="#777"/><circle cx="3" cy="23" r="1.800" fill="#4a78c0" stroke="#2a4a8a" stroke-width=".7"/></svg>
<div class="vsep" style="left:707px;top:849px;height:22px"></div>
<svg class="ic" style="left:716px;top:847px" width="23" height="24" viewBox="0 0 23 24" ><circle cx="11.500" cy="2.500" r="1.500" fill="none" stroke="#777" stroke-width=".9"/><rect x="1.500" y="4.500" width="20" height="17.500" rx="1" fill="#b08a5a" stroke="#5a3e1e"/><rect x="4" y="7" width="15" height="12.500" fill="#f4f4f2" stroke="#7a5a32" stroke-width=".7"/><text x="11.500" y="17.500" font-family="Liberation Sans,sans-serif" font-weight="bold" font-size="11" text-anchor="middle" fill="#111">A</text></svg>
<svg class="ic" style="left:747px;top:847px" width="26" height="25" viewBox="0 0 26 25" ><rect x="1.500" y="1.500" width="22" height="22" fill="none" stroke="#111" stroke-width="1" stroke-dasharray="1 2"/><rect x=".5" y=".5" width="2.500" height="2.500" fill="#111"/><rect x="22" y=".5" width="2.500" height="2.500" fill="#111"/><rect x=".5" y="22" width="2.500" height="2.500" fill="#111"/><rect x="22" y="22" width="2.500" height="2.500" fill="#111"/><circle cx="16.500" cy="8" r="5.200" fill="#f6dc6a" stroke="#b8962a" stroke-width=".8"/><rect x="3.500" y="7.500" width="10.500" height="10.500" fill="#e0401e" stroke="#8a1e0a" stroke-width=".9"/><path d="M16.500 11l5 10.500h-10z" fill="#5a84c4" stroke="#2a4a8a" stroke-width=".9" stroke-linejoin="round"/></svg>
<svg class="ic" style="left:780px;top:847px" width="25" height="23" viewBox="0 0 25 23" ><rect x="1.500" y="1.500" width="15" height="12" rx="1" fill="#f4f6f8" stroke="#a2a6ac"/><rect x="3.500" y="3.500" width="11" height="8" fill="#6a9ad8"/><rect x="7.500" y="7.500" width="16" height="13" rx="1" fill="#f4f6f8" stroke="#8d9096"/><rect x="9.500" y="9.500" width="12" height="9" fill="#3a72c0"/><path d="M11 16l3-3l2 2l3-4" fill="none" stroke="#cfe0f6" stroke-width="1"/></svg>
<div class="vsep" style="left:813px;top:849px;height:22px"></div>
<svg class="ic" style="left:822px;top:849px" width="23" height="21" viewBox="0 0 23 21" ><rect x="4" y="1.500" width="11" height="8" fill="#8aa6cc" stroke="#4a5a72" stroke-width=".9"/><path d="M6.500 9.500l8-5.500l6.500 9.500l-8 5.500z" fill="#b9c6d8" stroke="#3a4252" stroke-width="1" stroke-linejoin="round"/><path d="M17 2.500c2 .5 3 1.500 3.500 3.500" fill="none" stroke="#111" stroke-width="1.200"/><path d="M21.500 4l-.8 3.500l-2.500-2z" fill="#111"/><path d="M6 17.500c-2-.5-3-1.500-3.500-3.500" fill="none" stroke="#111" stroke-width="1.200"/><path d="M1.500 16l.8-3.500l2.500 2z" fill="#111"/></svg>
<svg class="ic" style="left:855px;top:849px" width="20" height="22" viewBox="0 0 20 22" ><path d="M2 1v20" stroke="#111" stroke-width="2"/><rect x="4.500" y="2.500" width="9" height="4.500" fill="#7aa0d8" stroke="#3a5a92" stroke-width=".9"/><rect x="4.500" y="8.800" width="13.500" height="4.500" fill="#8ab050" stroke="#4a6a22" stroke-width=".9"/><rect x="4.500" y="15" width="9" height="4.500" fill="#7aa0d8" stroke="#3a5a92" stroke-width=".9"/></svg>
<div class="dd" style="left:889px;top:858px"></div>
<svg class="ic" style="left:904px;top:847px" width="25" height="24" viewBox="0 0 25 24" ><rect x="9.500" y="1.500" width="13.500" height="13.500" fill="#d0d0ce" stroke="#8a8a88"/><rect x="1.500" y="9.500" width="13.500" height="13.500" fill="#d0d0ce" stroke="#8a8a88"/><rect x="4.500" y="4.500" width="15" height="15" fill="#86b058" stroke="#4a6e26" stroke-width="1"/><rect x="5.500" y="5.500" width="13" height="6" fill="#a6c87e" opacity=".6"/></svg>
<div class="dd" style="left:938px;top:858px"></div>
<div class="vsep" style="left:955px;top:849px;height:22px"></div>
<svg class="ic" style="left:963px;top:849px" width="22" height="22" viewBox="0 0 22 22" ><path d="M5.500 1.500h11l3.500 3.500v11.500h-14.500z" fill="#dad9d7" stroke="#cdccca"/><path d="M1.500 8.500h6v-2l4.500 4l-4.500 4v-2h-3.500l-2.500 3z" fill="#e6e5e3" stroke="#c9c8c6" stroke-width=".9" stroke-linejoin="round"/></svg>
<svg class="ic" style="left:997px;top:855px" width="22" height="12" viewBox="0 0 22 12" ><path d="M6 1l-5 5l5 5M16 1l5 5l-5 5" fill="none" stroke="#cfcecc" stroke-width="1.600"/><path d="M8 6h1.500M10.500 6h1.500M13 6h1.500" stroke="#cfcecc" stroke-width="1.400"/></svg>
<!--TB3E-->
<div class="ssep" style="left:460px"></div>
<div class="st" style="left:489px">10,01 / -3,66</div>
<div class="st" style="left:595px">0,00 x 0,00</div>
<div class="ssep" style="left:681px"></div>
<div class="ssep" style="left:708px"></div>
<div class="ssep" style="left:737px"></div>
<div class="st" style="left:743px">Folie 2 / 2</div>
<div class="ssep" style="left:804px"></div>
<div class="st" style="left:810px">Standard</div>
<div class="ssep" style="left:991px"></div>
<div class="ssep" style="left:1136px"></div>
<div class="st" style="left:1144px">55%</div>
<svg class="ic" style="left:467px;top:884px" width="17" height="15" shape-rendering="crispEdges"><path d="M0 4.500h8M3.500 0v9" stroke="#1b2f8a" stroke-width="1"/><path d="M5 11.500h10M14.500 5v7M6 5.500h9M5.500 6v6" stroke="#222" stroke-width="1" stroke-dasharray="1 1" fill="none"/></svg>
<svg class="ic" style="left:574px;top:884px" width="16" height="15" shape-rendering="crispEdges"><rect x="4.500" y="2.500" width="9" height="10" fill="none" stroke="#222" stroke-dasharray="1 1"/><path d="M4 2h3M4 2v2M14 2h-3M14 2v2" stroke="#222" stroke-width="1" fill="none"/><path d="M1.500 6v1M1.500 9v1M1.500 12v1" stroke="#222"/></svg>
<svg class="ic" style="left:688px;top:886px" width="11" height="13"><path d="M0.500 0.500h7l3 3v9h-10z" fill="#fff" stroke="#9a9894"/><path d="M7.500 0.500v3h3" fill="#d96a3a" stroke="#9a9894" stroke-width=".6"/><path d="M5 4.500v6M2.200 7.500h5.600M3 5.500l4 4M7 5.500l-4 4" stroke="#e8602c" stroke-width="1"/></svg>

</body></html>
